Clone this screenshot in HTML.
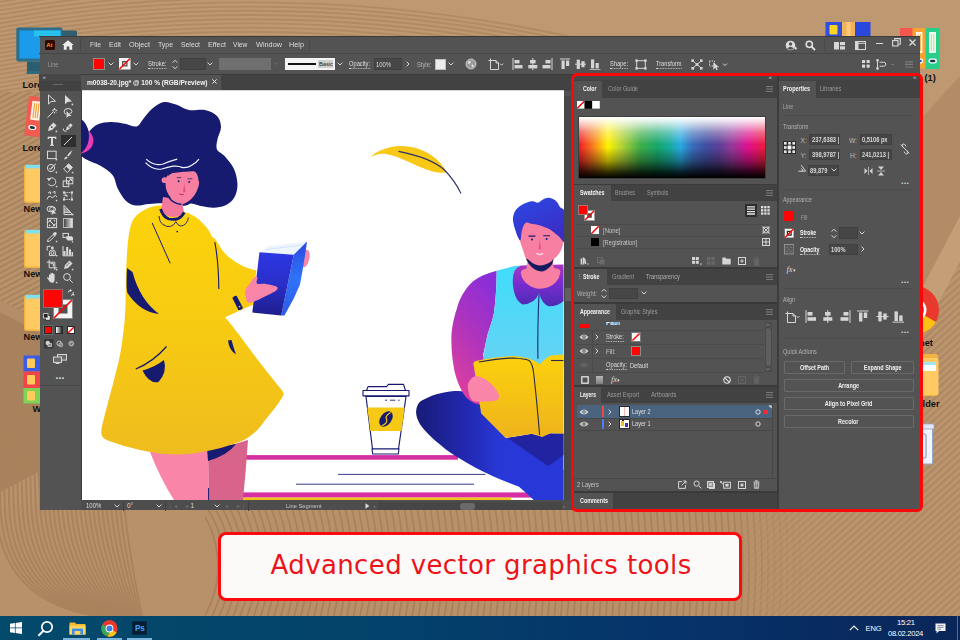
<!DOCTYPE html>
<html lang="en">
<head>
<meta charset="utf-8">
<title>Advanced vector graphics tools</title>
<style>
*{box-sizing:border-box;margin:0;padding:0}
html,body{width:960px;height:640px;overflow:hidden;background:#b8926c;font-family:"Liberation Sans",sans-serif}
#desk{position:absolute;left:0;top:0;width:960px;height:640px;overflow:hidden}
#desk div,#desk span,#desk svg,#desk i{position:absolute}
#win{left:39.5px;top:36.5px;width:880.5px;height:473px;background:#535353}
.t{color:#dedede;font-size:7.3px;line-height:9px;white-space:nowrap;font-style:normal}
.dim{color:#9c9c9c}
.b{font-weight:bold;color:#f4f4f4}
.u{border-bottom:1px dotted #cfcfcf;line-height:8px}
.bar{background:#424242}
.tab{background:#535353}
.fld{background:#464646;border:1px solid #404040}
.sep{height:1px;background:#494949}
.btn{height:13px;border:1px solid #6a6a6a;border-radius:1px;text-align:center;color:#f0f0f0;font-size:6.6px;line-height:11px;font-weight:bold;white-space:nowrap}
.btn b{display:inline-block;transform:scaleX(.83);font-weight:bold}
.ic{stroke:#d6d6d6;fill:none;stroke-width:1}
.dl{fill:#d6d6d6}
#label{left:218px;top:532px;width:524.4px;height:69px;background:#fcfaf9;border:3.2px solid #fb0b0b;border-radius:8px}
#label span{left:1.1px;top:0;width:518px;height:62.6px;line-height:61px;text-align:center;color:#ec1319;font-family:"DejaVu Sans","Liberation Sans",sans-serif;font-size:26px;white-space:nowrap;letter-spacing:0.38px}
#task{left:0;top:616px;width:960px;height:24px;background:linear-gradient(90deg,#044a6b 0%,#03426a 40%,#06336a 70%,#0a2659 100%)}
#hl{left:571.4px;top:72.8px;width:351.5px;height:439px;border:3.5px solid #f80808;border-radius:6px}
</style>
</head>
<body>
<div id="desk">
<svg style="left:0;top:0" width="960" height="640" viewBox="0 0 960 640">
<defs>
<pattern id="pd1" width="5" height="5" patternUnits="userSpaceOnUse" patternTransform="rotate(-14)"><rect width="5" height="5" fill="#bf9971"/><rect y="0" width="5" height="2.2" fill="#b38c65"/></pattern>
<pattern id="pd2" width="5" height="5" patternUnits="userSpaceOnUse" patternTransform="rotate(-28)"><rect width="5" height="5" fill="#b9936c"/><rect y="0" width="5" height="2.2" fill="#a9835c"/></pattern>
<pattern id="pd3" width="5.2" height="5.2" patternUnits="userSpaceOnUse" patternTransform="rotate(-42)"><rect width="5.2" height="5.2" fill="#bb956e"/><rect y="0" width="5.2" height="2.3" fill="#ae8861"/></pattern>
<linearGradient id="gtop" x1="0" x2="1"><stop offset="0" stop-color="#bf9971" stop-opacity="0"/><stop offset="0.55" stop-color="#bf9971" stop-opacity="0"/><stop offset="0.68" stop-color="#bf9971" stop-opacity="1"/><stop offset="1" stop-color="#be9870" stop-opacity="1"/></linearGradient>
<radialGradient id="gsm" cx="0.5" cy="0.5" r="0.5"><stop offset="0" stop-color="#b9926c"/><stop offset="0.8" stop-color="#b8916b"/><stop offset="1" stop-color="#b8916b" stop-opacity="0"/></radialGradient>
<clipPath id="cl"><rect x="0" y="395" width="230" height="221"/></clipPath>
<clipPath id="cr"><rect x="205" y="505" width="640" height="111"/></clipPath>
<linearGradient id="gm1" gradientUnits="userSpaceOnUse" x1="730" y1="0" x2="840" y2="0"><stop offset="0" stop-color="#fff"/><stop offset="1" stop-color="#000"/></linearGradient>
<linearGradient id="gm2" gradientUnits="userSpaceOnUse" x1="730" y1="0" x2="840" y2="0"><stop offset="0" stop-color="#000"/><stop offset="1" stop-color="#fff"/></linearGradient>
<mask id="m1"><rect x="0" y="0" width="960" height="640" fill="url(#gm1)"/></mask>
<mask id="m2"><rect x="0" y="0" width="960" height="640" fill="url(#gm2)"/></mask>
</defs>
<rect width="960" height="640" fill="#b9936c"/>
<rect x="0" y="0" width="960" height="40" fill="#be9870"/><rect x="0" y="40" width="42" height="58" fill="#be9870"/>
<clipPath id="ct"><path d="M0 0H960V40H42V100H0Z"/></clipPath><clipPath id="ct2"><rect x="0" y="0" width="250" height="100"/></clipPath><g clip-path="url(#ct)"><g fill="none" stroke="#b18a63" stroke-width="1.9"><circle cx="250" cy="1500" r="1380.0"/><circle cx="250" cy="1500" r="1384.2"/><circle cx="250" cy="1500" r="1388.4"/><circle cx="250" cy="1500" r="1392.6"/><circle cx="250" cy="1500" r="1396.8"/><circle cx="250" cy="1500" r="1401.0"/><circle cx="250" cy="1500" r="1405.2"/><circle cx="250" cy="1500" r="1409.4"/><circle cx="250" cy="1500" r="1413.6"/><circle cx="250" cy="1500" r="1417.8"/><circle cx="250" cy="1500" r="1422.0"/><circle cx="250" cy="1500" r="1426.2"/><circle cx="250" cy="1500" r="1430.4"/><circle cx="250" cy="1500" r="1434.6"/><circle cx="250" cy="1500" r="1438.8"/><circle cx="250" cy="1500" r="1443.0"/><circle cx="250" cy="1500" r="1447.2"/><circle cx="250" cy="1500" r="1451.4"/><circle cx="250" cy="1500" r="1455.6"/><circle cx="250" cy="1500" r="1459.8"/><circle cx="250" cy="1500" r="1464.0"/><circle cx="250" cy="1500" r="1468.2"/><circle cx="250" cy="1500" r="1472.4"/><circle cx="250" cy="1500" r="1476.6"/><circle cx="250" cy="1500" r="1480.8"/><circle cx="250" cy="1500" r="1485.0"/><circle cx="250" cy="1500" r="1489.2"/><circle cx="250" cy="1500" r="1493.4"/><circle cx="250" cy="1500" r="1497.6"/></g><g clip-path="url(#ct2)" fill="none" stroke="#b18a63" stroke-width="1.9"><circle cx="250" cy="1500" r="1501.8"/><circle cx="250" cy="1500" r="1506.0"/><circle cx="250" cy="1500" r="1510.2"/><circle cx="250" cy="1500" r="1514.4"/><circle cx="250" cy="1500" r="1518.6"/><circle cx="250" cy="1500" r="1522.8"/><circle cx="250" cy="1500" r="1527.0"/><circle cx="250" cy="1500" r="1531.2"/><circle cx="250" cy="1500" r="1535.4"/><circle cx="250" cy="1500" r="1539.6"/><circle cx="250" cy="1500" r="1543.8"/></g></g>
<rect x="0" y="92" width="42" height="220" fill="url(#pd2)"/>
<path d="M0 300 L42 322 V470 L0 492Z" fill="#a8825c"/>
<path d="M0 300 L42 322 V334 L0 312Z" fill="#b48e68"/>
<rect x="918" y="0" width="42" height="120" fill="#be9870"/>
<path d="M918 122 L960 76 V216 L918 296Z" fill="#b28c66"/>
<path d="M918 296 L960 216 V262 L918 342Z" fill="#c49e76"/>
<path d="M918 342 L960 262 V520 H918Z" fill="url(#pd3)"/>
<rect x="0" y="505" width="960" height="115" fill="#b8916b"/>
<g clip-path="url(#cl)" fill="none" stroke="#a9835d" stroke-width="2"><path d="M112.0 395.0 L124.0 505.0 Q130.0 560.0 142.0 616.0"/><path d="M108.1 395.0 L119.6 505.0 Q125.4 561.4 140.4 616.0"/><path d="M104.3 395.0 L115.2 505.0 Q120.9 562.8 138.8 616.0"/><path d="M100.4 395.0 L110.8 505.0 Q116.3 564.1 137.2 616.0"/><path d="M96.4 395.0 L106.3 505.0 Q111.8 565.5 135.7 616.0"/><path d="M92.5 395.0 L101.9 505.0 Q107.2 566.9 134.1 616.0"/><path d="M88.5 395.0 L97.5 505.0 Q102.7 568.3 132.5 616.0"/><path d="M84.5 395.0 L93.1 505.0 Q98.1 569.7 130.9 616.0"/><path d="M80.5 395.0 L88.7 505.0 Q93.6 571.0 129.3 616.0"/><path d="M76.5 395.0 L84.3 505.0 Q89.0 572.4 127.7 616.0"/><path d="M72.5 395.0 L79.9 505.0 Q84.5 573.8 126.1 616.0"/><path d="M68.4 395.0 L75.4 505.0 Q79.9 575.2 124.6 616.0"/><path d="M64.4 395.0 L71.0 505.0 Q75.4 576.6 123.0 616.0"/><path d="M60.3 395.0 L66.6 505.0 Q70.8 577.9 121.4 616.0"/><path d="M56.2 395.0 L62.2 505.0 Q66.3 579.3 119.8 616.0"/><path d="M52.1 395.0 L57.8 505.0 Q61.7 580.7 118.2 616.0"/><path d="M48.0 395.0 L53.4 505.0 Q57.2 582.1 116.6 616.0"/><path d="M43.8 395.0 L49.0 505.0 Q52.6 583.4 115.0 616.0"/><path d="M39.7 395.0 L44.6 505.0 Q48.1 584.8 113.4 616.0"/><path d="M35.6 395.0 L40.1 505.0 Q43.5 586.2 111.9 616.0"/><path d="M31.4 395.0 L35.7 505.0 Q39.0 587.6 110.3 616.0"/><path d="M27.2 395.0 L31.3 505.0 Q34.4 589.0 108.7 616.0"/><path d="M23.1 395.0 L26.9 505.0 Q29.9 590.3 107.1 616.0"/><path d="M18.9 395.0 L22.5 505.0 Q25.3 591.7 105.5 616.0"/><path d="M14.7 395.0 L18.1 505.0 Q20.8 593.1 103.9 616.0"/><path d="M10.5 395.0 L13.7 505.0 Q16.2 594.5 102.3 616.0"/><path d="M6.3 395.0 L9.2 505.0 Q11.7 595.9 100.8 616.0"/><path d="M2.1 395.0 L4.8 505.0 Q7.1 597.2 99.2 616.0"/><path d="M-2.1 395.0 L0.4 505.0 Q2.6 598.6 97.6 616.0"/><path d="M-6.3 395.0 L-4.0 505.0 Q-2.0 600.0 96.0 616.0"/></g>
<g mask="url(#m1)"><g clip-path="url(#cr)" fill="none" stroke="#a8825c" stroke-width="1.8"><circle cx="118" cy="566" r="100.0"/><circle cx="118" cy="566" r="106.4"/><circle cx="118" cy="566" r="112.8"/><circle cx="118" cy="566" r="119.2"/><circle cx="118" cy="566" r="125.6"/><circle cx="118" cy="566" r="132.0"/><circle cx="118" cy="566" r="138.4"/><circle cx="118" cy="566" r="144.8"/><circle cx="118" cy="566" r="151.2"/><circle cx="118" cy="566" r="157.6"/><circle cx="118" cy="566" r="164.0"/><circle cx="118" cy="566" r="170.4"/><circle cx="118" cy="566" r="176.8"/><circle cx="118" cy="566" r="183.2"/><circle cx="118" cy="566" r="189.6"/><circle cx="118" cy="566" r="196.0"/><circle cx="118" cy="566" r="202.4"/><circle cx="118" cy="566" r="208.8"/><circle cx="118" cy="566" r="215.2"/><circle cx="118" cy="566" r="221.6"/><circle cx="118" cy="566" r="228.0"/><circle cx="118" cy="566" r="234.4"/><circle cx="118" cy="566" r="240.8"/><circle cx="118" cy="566" r="247.2"/><circle cx="118" cy="566" r="253.6"/><circle cx="118" cy="566" r="260.0"/><circle cx="118" cy="566" r="266.4"/><circle cx="118" cy="566" r="272.8"/><circle cx="118" cy="566" r="279.2"/><circle cx="118" cy="566" r="285.6"/><circle cx="118" cy="566" r="292.0"/><circle cx="118" cy="566" r="298.4"/><circle cx="118" cy="566" r="304.8"/><circle cx="118" cy="566" r="311.2"/><circle cx="118" cy="566" r="317.6"/><circle cx="118" cy="566" r="324.0"/><circle cx="118" cy="566" r="330.4"/><circle cx="118" cy="566" r="336.8"/><circle cx="118" cy="566" r="343.2"/><circle cx="118" cy="566" r="349.6"/><circle cx="118" cy="566" r="356.0"/><circle cx="118" cy="566" r="362.4"/><circle cx="118" cy="566" r="368.8"/><circle cx="118" cy="566" r="375.2"/><circle cx="118" cy="566" r="381.6"/><circle cx="118" cy="566" r="388.0"/><circle cx="118" cy="566" r="394.4"/><circle cx="118" cy="566" r="400.8"/><circle cx="118" cy="566" r="407.2"/><circle cx="118" cy="566" r="413.6"/><circle cx="118" cy="566" r="420.0"/><circle cx="118" cy="566" r="426.4"/><circle cx="118" cy="566" r="432.8"/><circle cx="118" cy="566" r="439.2"/><circle cx="118" cy="566" r="445.6"/><circle cx="118" cy="566" r="452.0"/><circle cx="118" cy="566" r="458.4"/><circle cx="118" cy="566" r="464.8"/><circle cx="118" cy="566" r="471.2"/><circle cx="118" cy="566" r="477.6"/><circle cx="118" cy="566" r="484.0"/><circle cx="118" cy="566" r="490.4"/><circle cx="118" cy="566" r="496.8"/><circle cx="118" cy="566" r="503.2"/><circle cx="118" cy="566" r="509.6"/><circle cx="118" cy="566" r="516.0"/><circle cx="118" cy="566" r="522.4"/><circle cx="118" cy="566" r="528.8"/><circle cx="118" cy="566" r="535.2"/><circle cx="118" cy="566" r="541.6"/><circle cx="118" cy="566" r="548.0"/><circle cx="118" cy="566" r="554.4"/><circle cx="118" cy="566" r="560.8"/><circle cx="118" cy="566" r="567.2"/><circle cx="118" cy="566" r="573.6"/><circle cx="118" cy="566" r="580.0"/><circle cx="118" cy="566" r="586.4"/><circle cx="118" cy="566" r="592.8"/><circle cx="118" cy="566" r="599.2"/><circle cx="118" cy="566" r="605.6"/><circle cx="118" cy="566" r="612.0"/><circle cx="118" cy="566" r="618.4"/><circle cx="118" cy="566" r="624.8"/><circle cx="118" cy="566" r="631.2"/><circle cx="118" cy="566" r="637.6"/><circle cx="118" cy="566" r="644.0"/><circle cx="118" cy="566" r="650.4"/><circle cx="118" cy="566" r="656.8"/><circle cx="118" cy="566" r="663.2"/><circle cx="118" cy="566" r="669.6"/><circle cx="118" cy="566" r="676.0"/><circle cx="118" cy="566" r="682.4"/><circle cx="118" cy="566" r="688.8"/><circle cx="118" cy="566" r="695.2"/><circle cx="118" cy="566" r="701.6"/><circle cx="118" cy="566" r="708.0"/><circle cx="118" cy="566" r="714.4"/><circle cx="118" cy="566" r="720.8"/><circle cx="118" cy="566" r="727.2"/><circle cx="118" cy="566" r="733.6"/><circle cx="118" cy="566" r="740.0"/></g></g>
<rect x="720" y="505" width="240" height="112" fill="url(#pd3)" mask="url(#m2)"/>
</svg>
<!-- left desktop icons -->
<svg style="left:14px;top:24px" width="70" height="54" viewBox="14 24 70 54"><rect x="55" y="30.5" width="22" height="40" rx="1.5" fill="#2f5f6e"/><rect x="16.3" y="27.5" width="46" height="34" rx="2" fill="#2b6f8a"/><rect x="19.5" y="30.5" width="41" height="28" fill="#1b9ceb"/><rect x="34" y="30.5" width="26.5" height="6" fill="#27c3ee"/><rect x="27" y="61.5" width="20" height="9.5" fill="#2a5f72"/><rect x="26.5" y="71" width="22" height="3" rx="1" fill="#2f6a7e"/></svg>
<span class="t" style="left:22.5px;top:79.5px;font-size:9.2px;font-weight:bold;color:#111;line-height:11px">Lorem</span>
<svg style="left:22px;top:94px" width="24" height="46" viewBox="22 94 24 46"><g transform="rotate(7 34 117)"><rect x="26.5" y="96.5" width="17" height="40" rx="1.5" fill="#f25b50"/><rect x="30.5" y="101" width="9" height="19" fill="#fff3e6"/><path d="M33 103v15M35.2 103v15M37.4 103v15" stroke="#f2a23a" stroke-width="1.2"/><rect x="29.6" y="125.4" width="8" height="4.6" rx="2.3" fill="#fff"/><rect x="31" y="126.4" width="5.2" height="2.6" rx="1.3" fill="#13333f"/></g></svg>
<span class="t" style="left:22.5px;top:143px;font-size:9.2px;font-weight:bold;color:#111;line-height:11px">Lorem</span>
<svg style="left:23px;top:164px" width="24" height="40" viewBox="0 0 24 40"><rect x="1" y="1" width="22" height="38" rx="2" fill="#f3b343"/><rect x="2.6" y="0.8" width="20" height="4" fill="#7fe0ee"/><rect x="2.4" y="4.6" width="21" height="33" rx="1.5" fill="#ffca62"/></svg>
<span class="t" style="left:23.5px;top:204px;font-size:9.2px;font-weight:bold;color:#111;line-height:11px">New</span>
<svg style="left:23px;top:229px" width="24" height="40" viewBox="0 0 24 40"><rect x="1" y="1" width="22" height="38" rx="2" fill="#f3b343"/><rect x="2.6" y="0.8" width="20" height="4" fill="#7fe0ee"/><rect x="2.4" y="4.6" width="21" height="33" rx="1.5" fill="#ffca62"/></svg>
<span class="t" style="left:23.5px;top:268.5px;font-size:9.2px;font-weight:bold;color:#111;line-height:11px">New</span>
<svg style="left:23px;top:293.5px" width="24" height="38" viewBox="0 0 24 38"><rect x="1" y="1" width="22" height="36" rx="2" fill="#f3b343"/><rect x="2.6" y="0.8" width="20" height="4" fill="#7fe0ee"/><rect x="2.4" y="4.6" width="21" height="31" rx="1.5" fill="#ffca62"/></svg>
<span class="t" style="left:23.5px;top:332px;font-size:9.2px;font-weight:bold;color:#111;line-height:11px">New</span>
<svg style="left:23px;top:355px" width="24" height="50" viewBox="0 0 24 50"><rect x="0.5" y="0.5" width="23" height="16" fill="#3d5ce6"/><rect x="0.5" y="16.5" width="23" height="16.5" fill="#f2454a"/><rect x="0.5" y="33" width="23" height="15.5" fill="#7fd455"/><rect x="4" y="3.6" width="8" height="9.4" rx="1" fill="#ffcc5c"/><rect x="4" y="20" width="8" height="9.4" rx="1" fill="#ffcc5c"/><rect x="4" y="36" width="8" height="9.4" rx="1" fill="#ffcc5c"/></svg>
<span class="t" style="left:32.5px;top:403.5px;font-size:9.2px;font-weight:bold;color:#111;line-height:11px">Wo</span>
<!-- right/top desktop icons -->
<svg style="left:825px;top:21px" width="46" height="20" viewBox="0 0 46 20"><rect x="0.5" y="1" width="16.5" height="19" fill="#2f4fe0"/><rect x="4.5" y="4" width="8" height="9.5" rx="1" fill="#ffd21f"/><rect x="17" y="1" width="13" height="19" fill="#f2b25a"/><rect x="21.5" y="1" width="4" height="19" fill="#ffc978"/><rect x="30" y="1" width="15.5" height="19" fill="#2a48dc"/></svg>
<svg style="left:896px;top:26px" width="46" height="46" viewBox="896 26 46 46"><rect x="900" y="28" width="13" height="40" rx="1" fill="#f4564e"/><rect x="912.5" y="28" width="13.4" height="40.5" rx="1" fill="#f7a231"/><rect x="916" y="32" width="6.4" height="21" fill="#fff6e8"/><path d="M918 34v17M920.4 34v17" stroke="#f2b25a" stroke-width="1"/><rect x="915.6" y="58.6" width="7.6" height="4.8" rx="2.4" fill="#fff"/><rect x="917" y="59.7" width="4.8" height="2.6" rx="1.3" fill="#1e5aa8"/><rect x="925.6" y="28" width="14" height="41" rx="1" fill="#27cf8a"/><rect x="929" y="32" width="7" height="21" fill="#e8fff2"/><path d="M931.3 34v17M933.8 34v17" stroke="#f2c27a" stroke-width="1"/><rect x="928.4" y="58.6" width="8.6" height="4.8" rx="2.4" fill="#fff"/><rect x="930" y="59.7" width="5.4" height="2.6" rx="1.3" fill="#13333f"/></svg>
<span class="t" style="left:924.5px;top:73px;font-size:9.2px;font-weight:bold;color:#111;line-height:11px">(1)</span>
<svg style="left:890px;top:284px" width="52" height="52" viewBox="890 284 52 52"><circle cx="915" cy="310" r="24" fill="#e8392c"/><path d="M915 310 L936 322 A24 24 0 0 1 903 330.8Z" fill="#fbc116"/><circle cx="915" cy="310" r="11.5" fill="#fff"/><circle cx="915" cy="310" r="9" fill="#2f7fe8"/></svg>
<span class="t" style="left:915.5px;top:337.5px;font-size:9.2px;font-weight:bold;color:#111;line-height:11px">rnet</span>
<svg style="left:914px;top:353px" width="26" height="44" viewBox="0 0 26 44"><rect x="0" y="1" width="24" height="42" rx="2" fill="#f3b343"/><rect x="0" y="5" width="24.5" height="37" rx="1.5" fill="#ffca62"/><rect x="2" y="9" width="20" height="9" fill="#fff"/><rect x="2" y="9" width="20" height="3" fill="#9fe6f2"/></svg>
<span class="t" style="left:917px;top:398.5px;font-size:9.2px;font-weight:bold;color:#111;line-height:11px">older</span>
<svg style="left:912px;top:422px" width="24" height="44" viewBox="0 0 24 44"><rect x="1" y="6.5" width="19.5" height="35.5" rx="1" fill="#f1f4fb" stroke="#98a6c8" stroke-width="1"/><rect x="0" y="2" width="22" height="5" rx="1" fill="#e2e8f6" stroke="#98a6c8" stroke-width="0.8"/><rect x="10" y="12" width="4" height="24" rx="1.4" fill="none" stroke="#8c9cc4" stroke-width="1.2"/></svg>

<div id="win"></div>
<!-- menu bar -->
<div style="left:39px;top:36px;width:881px;height:1px;background:#3b3b3b"></div>
<div style="left:39px;top:53px;width:881px;height:1px;background:#464646"></div>
<div style="left:45px;top:40px;width:9.5px;height:9.5px;background:#2e0b00;border-radius:1.5px"></div>
<span class="t" style="left:46.3px;top:40.6px;color:#ff9a1f;font-size:6px;font-weight:bold;line-height:8px">Ai</span>
<svg style="left:62px;top:40px" width="12" height="10" viewBox="0 0 12 10"><path d="M6 0.3 L0.3 5 H1.8 V9.7 H4.7 V6.4 H7.3 V9.7 H10.2 V5 H11.7 Z" fill="#ececec"/></svg>
<div style="left:80px;top:39px;width:1px;height:12px;background:#474747"></div>
<span class="t" style="left:90px;top:40px;font-size:7.6px;transform:scaleX(0.898);transform-origin:0 50%">File</span>
<span class="t" style="left:109px;top:40px;font-size:7.6px;transform:scaleX(0.916);transform-origin:0 50%">Edit</span>
<span class="t" style="left:129px;top:40px;font-size:7.6px;transform:scaleX(0.957);transform-origin:0 50%">Object</span>
<span class="t" style="left:158px;top:40px;font-size:7.6px;transform:scaleX(0.911);transform-origin:0 50%">Type</span>
<span class="t" style="left:180.5px;top:40px;font-size:7.6px;transform:scaleX(0.9);transform-origin:0 50%">Select</span>
<span class="t" style="left:207.5px;top:40px;font-size:7.6px;transform:scaleX(0.934);transform-origin:0 50%">Effect</span>
<span class="t" style="left:233px;top:40px;font-size:7.6px;transform:scaleX(0.888);transform-origin:0 50%">View</span>
<span class="t" style="left:255.75px;top:40px;font-size:7.6px;transform:scaleX(0.962);transform-origin:0 50%">Window</span>
<span class="t" style="left:288.75px;top:40px;font-size:7.6px;transform:scaleX(0.96);transform-origin:0 50%">Help</span>
<div style="left:309px;top:39px;width:1px;height:12px;background:#494949"></div>
<!-- menu right icons -->
<svg style="left:785px;top:39.5px" width="13" height="11" viewBox="0 0 13 11"><circle cx="5.5" cy="5.5" r="4.8" fill="#dcdcdc"/><circle cx="5.5" cy="4" r="1.7" fill="#535353"/><path d="M2.3 8.6 Q5.5 5 8.7 8.6 Q5.5 11 2.3 8.6Z" fill="#535353"/><path d="M9.2 8.2h3M10.7 6.7v3" stroke="#dcdcdc" stroke-width="1.1"/></svg>
<svg style="left:804.5px;top:40px" width="11" height="11" viewBox="0 0 11 11"><circle cx="4.3" cy="4.3" r="3.1" fill="none" stroke="#e4e4e4" stroke-width="1.5"/><path d="M6.6 6.6 L10 10" stroke="#e4e4e4" stroke-width="1.8"/></svg>
<div style="left:824px;top:39px;width:1px;height:12px;background:#494949"></div>
<svg style="left:834px;top:41.5px" width="11" height="8" viewBox="0 0 11 8"><rect x="0" y="0" width="5" height="7.5" fill="#d8d8d8"/><rect x="6" y="0" width="5" height="3.2" fill="#d8d8d8"/><rect x="6" y="4.3" width="5" height="3.2" fill="#d8d8d8"/></svg>
<svg style="left:854.5px;top:41px" width="11" height="9" viewBox="0 0 11 9"><rect x="0.5" y="0.5" width="10" height="8" fill="none" stroke="#d8d8d8"/><rect x="0.5" y="0.5" width="3" height="8" fill="#d8d8d8"/><path d="M0.5 2.3h10" stroke="#d8d8d8"/></svg>
<div style="left:876px;top:42.6px;width:7px;height:1.2px;background:#dadada"></div>
<svg style="left:891.5px;top:38px" width="9" height="9" viewBox="0 0 9 9"><rect x="0.6" y="2.6" width="5.4" height="5.4" fill="none" stroke="#dadada" stroke-width="1.1"/><path d="M2.8 2.4V0.6H8.3V6.2H6.2" fill="none" stroke="#dadada" stroke-width="1.1"/></svg>
<svg style="left:908.5px;top:39px" width="7" height="7" viewBox="0 0 7 7"><path d="M0.5 0.5L6.5 6.5M6.5 0.5L0.5 6.5" stroke="#e2e2e2" stroke-width="1.2"/></svg>

<!-- control bar -->
<span class="t dim" style="left:47.75px;top:60px;font-size:7px;transform:scaleX(0.774);transform-origin:0 50%">Line</span>
<div style="left:93px;top:58px;width:11.5px;height:11.5px;background:#fb0505;border:1px solid #8c8c8c"></div>
<svg style="left:107.5px;top:61.5px" width="6" height="4" viewBox="0 0 6 4"><path d="M0.6 0.6L3 3L5.4 0.6" class="ic" stroke-width="1.1"/></svg>
<svg style="left:119px;top:58px" width="11.5" height="11.5" viewBox="0 0 11.5 11.5"><rect x="0" y="0" width="11.5" height="11.5" fill="#f4f4f4"/><rect x="3" y="3" width="5.5" height="5.5" fill="#535353"/><rect x="4.3" y="4.3" width="2.9" height="2.9" fill="#f4f4f4"/><path d="M0.5 11L11 0.5" stroke="#f00" stroke-width="1.4"/></svg>
<svg style="left:132.5px;top:61.5px" width="6" height="4" viewBox="0 0 6 4"><path d="M0.6 0.6L3 3L5.4 0.6" class="ic" stroke-width="1.1"/></svg>
<span class="t u" style="left:147.5px;top:60px;font-size:7px;transform:scaleX(0.834);transform-origin:0 50%">Stroke:</span>
<svg style="left:171.5px;top:58.5px" width="6" height="11" viewBox="0 0 6 11"><path d="M0.7 3.6L3 1.2L5.3 3.6M0.7 7.4L3 9.8L5.3 7.4" class="ic" stroke-width="1.1"/></svg>
<div class="fld" style="left:180px;top:58px;width:26px;height:12px"></div>
<svg style="left:207px;top:61.5px" width="6" height="4" viewBox="0 0 6 4"><path d="M0.6 0.6L3 3L5.4 0.6" class="ic" stroke-width="1.1"/></svg>
<div style="left:218.5px;top:57.5px;width:52.5px;height:12.5px;background:#6f6f6f"></div>
<svg style="left:273.5px;top:62px" width="5" height="4" viewBox="0 0 5 4"><path d="M0.6 0.6L2.5 2.6L4.4 0.6" fill="none" stroke="#6c6c6c" stroke-width="1"/></svg>
<div style="left:285px;top:58px;width:49.5px;height:11.5px;background:#f3f3f3"></div>
<div style="left:288px;top:62.7px;width:28px;height:2px;background:#111"></div>
<div style="left:318px;top:59.5px;width:15px;height:8.5px;background:#cfcfcf"></div>
<span class="t" style="left:319px;top:59.5px;font-size:5.8px;color:#222;letter-spacing:-0.1px">Basic</span>
<svg style="left:337px;top:61.5px" width="6" height="4" viewBox="0 0 6 4"><path d="M0.6 0.6L3 3L5.4 0.6" class="ic" stroke-width="1.1"/></svg>
<span class="t u" style="left:349px;top:60px;font-size:7px;transform:scaleX(0.818);transform-origin:0 50%">Opacity:</span>
<div class="fld" style="left:373.5px;top:58px;width:28px;height:12px"></div>
<span class="t" style="left:376px;top:60px;font-size:6.8px;transform:scaleX(0.863);transform-origin:0 50%">100%</span>
<svg style="left:406px;top:61px" width="4" height="6" viewBox="0 0 4 6"><path d="M0.6 0.6L3 3L0.6 5.4" class="ic" stroke-width="1.1"/></svg>
<span class="t dim" style="left:416.75px;top:60px;font-size:7px;color:#b4b4b4;transform:scaleX(0.828);transform-origin:0 50%">Style:</span>
<div style="left:434.5px;top:58.5px;width:11px;height:11px;background:#ebebeb;border:1px solid #bdbdbd"></div>
<svg style="left:448px;top:61.5px" width="6" height="4" viewBox="0 0 6 4"><path d="M0.6 0.6L3 3L5.4 0.6" class="ic" stroke-width="1.1"/></svg>
<svg style="left:464.5px;top:58px" width="12" height="12" viewBox="0 0 12 12"><circle cx="6" cy="6" r="5" fill="#9a9a9a" stroke="#d0d0d0" stroke-width="0.9"/><path d="M3 3.5Q5 2.5 6 4Q5 6 3.5 6Q2.5 5 3 3.5ZM6.5 6.5Q8.5 6 9 8Q8 9.5 7 9Z" fill="#e0e0e0"/></svg>
<!-- artboard icon -->
<svg style="left:488px;top:58px" width="16" height="12" viewBox="0 0 16 12"><path d="M2.5 0.5V11.5M0.5 2.5H8L10.5 5V11.5H2.5M8 2.5V5H10.5" class="ic" stroke-width="1"/><path d="M12 5.6L13.6 7.2L15.2 5.6" class="ic"/></svg>
<!-- align icons -->
<svg style="left:511.5px;top:57.5px" width="90" height="12.5" viewBox="0 0 90 12.5">
<g fill="#d4d4d4">
<rect x="0.5" y="0" width="1" height="12.5"/><rect x="2.5" y="2" width="5" height="3.4"/><rect x="2.5" y="7" width="8" height="3.4"/>
<rect x="20.3" y="0" width="1" height="12.5"/><rect x="18" y="2" width="5.6" height="3.4"/><rect x="16.3" y="7" width="9" height="3.4"/>
<rect x="39.5" y="0" width="1" height="12.5"/><rect x="33.5" y="2" width="5" height="3.4"/><rect x="30.5" y="7" width="8" height="3.4"/>
<rect x="48" y="0.5" width="10" height="1"/><rect x="49.5" y="2.5" width="3.2" height="8.5"/><rect x="54" y="2.5" width="3.2" height="5.5"/>
<rect x="63" y="5.7" width="11" height="1"/><rect x="64.7" y="1.6" width="3.2" height="9.4"/><rect x="69.4" y="3.2" width="3.2" height="6"/>
<rect x="77.5" y="11.3" width="11" height="1"/><rect x="79" y="1.4" width="3.2" height="9"/><rect x="83.6" y="5" width="3.2" height="5.4"/>
</g></svg>
<span class="t u" style="left:609.5px;top:60px;font-size:7px;transform:scaleX(0.811);transform-origin:0 50%">Shape:</span>
<svg style="left:635px;top:58.5px" width="12" height="11" viewBox="0 0 12 11"><rect x="1.7" y="1.7" width="8.6" height="7.6" class="ic"/><g fill="#d6d6d6"><rect x="0.4" y="0.4" width="2.4" height="2.4"/><rect x="9.2" y="0.4" width="2.4" height="2.4"/><rect x="0.4" y="8.2" width="2.4" height="2.4"/><rect x="9.2" y="8.2" width="2.4" height="2.4"/></g></svg>
<span class="t u" style="left:656px;top:60px;font-size:7px;transform:scaleX(0.806);transform-origin:0 50%">Transform</span>
<svg style="left:691px;top:58.5px" width="12" height="11" viewBox="0 0 12 11"><g fill="#d6d6d6"><rect x="0.4" y="0.4" width="2.6" height="2.6"/><rect x="9" y="0.4" width="2.6" height="2.6"/><rect x="0.4" y="8" width="2.6" height="2.6"/><rect x="9" y="8" width="2.6" height="2.6"/><rect x="4.7" y="4.2" width="2.6" height="2.6"/></g><path d="M2.5 2.5L9.5 8.5M9.5 2.5L2.5 8.5" class="ic" stroke-width="0.9"/></svg>
<svg style="left:709px;top:58.5px" width="20" height="12" viewBox="0 0 20 12"><rect x="0.5" y="2" width="5" height="5" class="ic" stroke-dasharray="1.3 1"/><path d="M4.3 3.2L4.3 10.7L6.3 8.7L7.5 11.3L8.7 10.7L7.6 8.2L10.3 8.2Z" fill="#d6d6d6"/><path d="M14 4.6L16 6.6L18 4.6" class="ic" stroke-width="1.1"/></svg>
<!-- right control icons -->
<svg style="left:862px;top:60px" width="8" height="8" viewBox="0 0 8 8"><g fill="#d8d8d8"><rect x="0" y="0" width="3.1" height="3.1" rx="0.6"/><rect x="4.6" y="0" width="3.1" height="3.1" rx="0.6"/><rect x="0" y="4.6" width="3.1" height="3.1" rx="0.6"/><rect x="4.6" y="4.6" width="3.1" height="3.1" rx="0.6"/></g></svg>
<svg style="left:876px;top:58.5px" width="11" height="11" viewBox="0 0 11 11"><path d="M1.5 0.5V10.5" class="ic" stroke-width="1.3"/><rect x="0.3" y="0.2" width="2.4" height="2.2" fill="#d6d6d6"/><rect x="0.3" y="8.4" width="2.4" height="2.2" fill="#d6d6d6"/><path d="M3.5 3.2H7.6Q9.8 3.2 9.8 5.2Q9.8 7.2 7.6 7.2H3.5" class="ic" stroke-width="1.2"/></svg>
<div style="left:890.5px;top:63.5px;width:3px;height:1px;background:#777"></div>
<svg style="left:904.5px;top:60.5px" width="8" height="7" viewBox="0 0 8 7"><path d="M0 0.8H8M0 3.4H8M0 6H8" stroke="#7b7b7b" stroke-width="1.2"/></svg>

<!-- document tab bar -->
<div class="bar" style="left:39px;top:74px;width:533px;height:16.5px"></div>
<div style="left:39px;top:73.5px;width:881px;height:1px;background:#3c3c3c"></div>
<div style="left:39px;top:74px;width:42px;height:6.5px;background:#474747"></div>
<span class="t" style="left:42.5px;top:72.8px;font-size:6px;color:#c8c8c8;line-height:8px">«</span>
<div class="tab" style="left:81px;top:74.5px;width:139.5px;height:16px"></div>
<span class="t b" style="left:86.75px;top:77.6px;font-size:7px;transform:scaleX(0.94);transform-origin:0 50%">m0038-20.jpg* @ 100 % (RGB/Preview)</span>
<svg style="left:212.3px;top:79.3px" width="5" height="5" viewBox="0 0 5 5"><path d="M0.4 0.4L4.6 4.6M4.6 0.4L0.4 4.6" stroke="#e8e8e8" stroke-width="1"/></svg>

<div style="left:53px;top:83.5px;width:10px;height:1px;background:#696969"></div>
<!-- canvas -->
<div style="left:80.5px;top:90px;width:483px;height:410px;background:#fff;border-top:1px solid #d6d6d6"></div>
<div style="left:563.5px;top:90px;width:8.5px;height:410px;background:#474747"></div>
<div style="left:563.5px;top:90.5px;width:8.5px;height:5px;background:#505050"></div>
<div style="left:565px;top:288px;width:5.5px;height:13px;background:#5f5f5f"></div>
<div style="left:80.5px;top:90px;width:1px;height:410px;background:#3d3d3d"></div>

<!-- status bar -->
<div style="left:80.5px;top:500px;width:491.5px;height:10px;background:#4d4d4d"></div>
<span class="t" style="left:85.75px;top:502.2px;font-size:6.5px;line-height:8px;transform:scaleX(0.917);transform-origin:0 50%">100%</span>
<svg style="left:114px;top:504.3px" width="6" height="4" viewBox="0 0 6 4"><path d="M0.6 0.6L3 3L5.4 0.6" class="ic" stroke-width="1.1"/></svg>
<div style="left:122.5px;top:501.8px;width:1px;height:9px;background:#3f3f3f"></div>
<span class="t" style="left:127px;top:502.2px;font-size:6.5px;line-height:8px">0°</span>
<svg style="left:156px;top:504.3px" width="6" height="4" viewBox="0 0 6 4"><path d="M0.6 0.6L3 3L5.4 0.6" class="ic" stroke-width="1.1"/></svg>
<div style="left:164.5px;top:501.8px;width:1px;height:9px;background:#3f3f3f"></div>
<span class="t" style="left:169.5px;top:502.0px;font-size:6px;line-height:8px;color:#6e6e6e;letter-spacing:3px">|◂ ◂</span>
<span class="t" style="left:190.5px;top:502.2px;font-size:6.5px;line-height:8px">1</span>
<svg style="left:214px;top:504.3px" width="6" height="4" viewBox="0 0 6 4"><path d="M0.6 0.6L3 3L5.4 0.6" class="ic" stroke-width="1.1"/></svg>
<span class="t" style="left:226px;top:502.0px;font-size:6px;line-height:8px;color:#6e6e6e;letter-spacing:3px">▸ ▸|</span>
<div style="left:247.5px;top:501.8px;width:1px;height:9px;background:#3f3f3f"></div>
<span class="t" style="left:286px;top:502.4px;font-size:6px;line-height:8px;color:#c9c9c9;transform:scaleX(0.959);transform-origin:0 50%">Line Segment</span>
<svg style="left:364.5px;top:503.3px" width="5" height="6" viewBox="0 0 5 6"><path d="M0.5 0.3L4.3 3L0.5 5.7Z" fill="#dcdcdc"/></svg>
<span class="t" style="left:373.5px;top:501.6px;font-size:6px;line-height:8px;color:#9a9a9a">‹</span>
<div style="left:378px;top:502.3px;width:184px;height:8px;background:#464646"></div>
<div style="left:460px;top:502.8px;width:15px;height:7px;background:#6a6a6a;border-radius:3px"></div>
<span class="t" style="left:563px;top:501.6px;font-size:6px;line-height:8px;color:#9a9a9a">›</span>

<div style="left:60.8px;top:134.5px;width:15px;height:12px;background:#2f2f2f"></div>
<svg style="left:45.50px;top:93.50px" width="12" height="12" viewBox="0 0 12 12"><path d="M2.5 1L2.5 10L5 7.6L9.5 7.2Z" stroke="#dadada" fill="none" stroke-width="1" stroke-linejoin="round"/></svg>
<svg style="left:62.00px;top:93.50px" width="12" height="12" viewBox="0 0 12 12"><path d="M3 1L3 10.5L5.4 8L10 7.6Z" fill="#dadada"/><rect x="9.6" y="9.6" width="1.6" height="1.6" fill="#dadada"/></svg>
<svg style="left:45.50px;top:107.25px" width="12" height="12" viewBox="0 0 12 12"><path d="M1.5 10.5L7.5 4.5" stroke="#dadada" fill="none" stroke-width="1" stroke-width="1.4"/><path d="M8.5 1v2M8.5 5v1.5M6.2 3.6h1.4M9.6 3.6h1.6M6.9 2l.8.8M10.2 2l-.8.8M10.2 5.4l-.8-.8" stroke="#dadada" fill="none" stroke-width="1" stroke-width="0.8"/></svg>
<svg style="left:62.00px;top:107.25px" width="12" height="12" viewBox="0 0 12 12"><path d="M2 5Q2 1.5 6 1.5Q10 1.5 10 4.5Q10 6.5 7.5 6.5" stroke="#dadada" fill="none" stroke-width="1"/><path d="M4.5 4L4.5 11L6.3 9.3L9.5 9Z" fill="#dadada"/><path d="M2.3 5.2Q2.5 7 4 7" stroke="#dadada" fill="none" stroke-width="1"/></svg>
<svg style="left:45.50px;top:121.00px" width="12" height="12" viewBox="0 0 12 12"><path d="M2 10L3 6L7.5 1.5L10.5 4.5L6 9Z" fill="#dadada"/><circle cx="5.8" cy="6.2" r="0.9" fill="#535353"/><rect x="9.6" y="9.6" width="1.6" height="1.6" fill="#dadada"/></svg>
<svg style="left:62.00px;top:121.00px" width="12" height="12" viewBox="0 0 12 12"><path d="M4 9.5L4.6 6.6L8.5 2.2L10.6 4.2L6.7 8.6Z" fill="#dadada"/><path d="M1.2 7.5Q1 10.6 4.4 10.4" stroke="#dadada" fill="none" stroke-width="1"/><circle cx="7" cy="6" r="0.8" fill="#535353"/></svg>
<svg style="left:45.50px;top:134.75px" width="12" height="12" viewBox="0 0 12 12"><path d="M1.7 1.8H10.3V4H9.4Q9.2 3 8.2 3H6.9V9.3Q6.9 10 8 10.1V10.8H4V10.1Q5.1 10 5.1 9.3V3H3.8Q2.8 3 2.6 4H1.7Z" fill="#e8e8e8"/></svg>
<svg style="left:62.00px;top:134.75px" width="12" height="12" viewBox="0 0 12 12"><path d="M2 10L10 2" stroke="#dadada" fill="none" stroke-width="1" stroke-width="1.3"/></svg>
<svg style="left:45.50px;top:148.50px" width="12" height="12" viewBox="0 0 12 12"><rect x="1.5" y="2.2" width="8.6" height="7.4" stroke="#dadada" fill="none" stroke-width="1" fill="#6c6c6c"/><rect x="9.6" y="9.8" width="1.6" height="1.6" fill="#dadada"/></svg>
<svg style="left:62.00px;top:148.50px" width="12" height="12" viewBox="0 0 12 12"><path d="M10.5 1Q7 3.5 5.2 6.6L6.4 7.6Q9 5 10.5 1Z" fill="#dadada"/><path d="M4.6 7.4Q2.6 7.6 2 10.6Q4.6 10.6 5.7 8.5Z" fill="#dadada"/></svg>
<svg style="left:45.50px;top:162.25px" width="12" height="12" viewBox="0 0 12 12"><circle cx="5" cy="6" r="3.6" stroke="#dadada" fill="none" stroke-width="1"/><path d="M4.5 6.5L10 1.8" stroke="#dadada" fill="none" stroke-width="1" stroke-width="1.2"/><path d="M3.4 6L4.6 7.4L6.6 5" stroke="#dadada" fill="none" stroke-width="1" stroke-width="0.8"/><rect x="9.6" y="9.6" width="1.6" height="1.6" fill="#dadada"/></svg>
<svg style="left:62.00px;top:162.25px" width="12" height="12" viewBox="0 0 12 12"><path d="M1.6 7L6.6 1.8L10.4 5.4L5.4 10.6Z" stroke="#dadada" fill="none" stroke-width="1"/><path d="M4 4.5L6.6 1.8L10.4 5.4L7.8 8.1Z" fill="#dadada"/><rect x="9.8" y="9.8" width="1.5" height="1.5" fill="#dadada"/></svg>
<svg style="left:45.50px;top:176.00px" width="12" height="12" viewBox="0 0 12 12"><path d="M2.6 3.4A4 4 0 1 1 2.2 7.6" stroke="#dadada" fill="none" stroke-width="1" stroke-width="1.1"/><path d="M0.8 2L2.8 5.2L5.2 2.6Z" fill="#dadada"/><rect x="9.8" y="9.8" width="1.5" height="1.5" fill="#dadada"/></svg>
<svg style="left:62.00px;top:176.00px" width="12" height="12" viewBox="0 0 12 12"><rect x="1.2" y="5" width="5.6" height="5.6" stroke="#dadada" fill="none" stroke-width="1"/><rect x="4.4" y="1.4" width="6.4" height="6.4" stroke="#dadada" fill="none" stroke-width="1"/><path d="M5.8 6.4L9.4 2.8M9.4 2.8H7.2M9.4 2.8V5" stroke="#dadada" fill="none" stroke-width="1" stroke-width="0.9"/></svg>
<svg style="left:45.50px;top:189.75px" width="12" height="12" viewBox="0 0 12 12"><path d="M1 9.5Q2.5 5 4.5 6.5Q6.5 9 8 6.5Q9.5 4 11 7" stroke="#dadada" fill="none" stroke-width="1" stroke-width="1.2"/><path d="M2 3.2L4.2 1.6L4.6 4.2M6.6 2.4L9 1.4L9 4" stroke="#dadada" fill="none" stroke-width="1" stroke-width="0.9"/><rect x="9.8" y="9.8" width="1.5" height="1.5" fill="#dadada"/></svg>
<svg style="left:62.00px;top:189.75px" width="12" height="12" viewBox="0 0 12 12"><rect x="2.2" y="2.6" width="7.6" height="6.8" stroke="#dadada" fill="none" stroke-width="1" stroke-dasharray="1.4 0.9"/><g fill="#dadada"><rect x="1" y="1.4" width="2.2" height="2.2"/><rect x="8.8" y="1.4" width="2.2" height="2.2"/><rect x="1" y="8.4" width="2.2" height="2.2"/><rect x="8.8" y="8.4" width="2.2" height="2.2"/></g><path d="M3.2 3.2L6.4 6.6L3.4 6.4Z" fill="#dadada"/></svg>
<svg style="left:45.50px;top:203.50px" width="12" height="12" viewBox="0 0 12 12"><ellipse cx="4.6" cy="5" rx="3.6" ry="2.8" stroke="#dadada" fill="none" stroke-width="1"/><ellipse cx="6.6" cy="5.2" rx="3" ry="2.4" stroke="#dadada" fill="none" stroke-width="1"/><path d="M5.6 5.5L5.8 11L7.4 9.4L10.6 9.6Z" fill="#dadada"/></svg>
<svg style="left:62.00px;top:203.50px" width="12" height="12" viewBox="0 0 12 12"><path d="M2 1.4V10.6H10.6Z" stroke="#dadada" fill="none" stroke-width="1"/><path d="M2 5H5.4L7.2 7H2M2 8.4H8.6" stroke="#dadada" fill="none" stroke-width="1" stroke-width="0.8"/><rect x="9.8" y="9.8" width="1.5" height="1.5" fill="#dadada"/></svg>
<svg style="left:45.50px;top:217.25px" width="12" height="12" viewBox="0 0 12 12"><rect x="1.4" y="1.4" width="9.2" height="9.2" stroke="#dadada" fill="none" stroke-width="1"/><path d="M1.4 6Q4 2.4 6 6Q8 9.6 10.6 6M6 1.4Q2.6 4 6 6Q9.6 8 6 10.6" stroke="#dadada" fill="none" stroke-width="1" stroke-width="0.8"/><g fill="#dadada"><circle cx="3.6" cy="3.6" r="0.8"/><circle cx="8.4" cy="8.4" r="0.8"/><circle cx="8.4" cy="3.6" r="0.8"/><circle cx="3.6" cy="8.4" r="0.8"/></g></svg>
<svg style="left:62.00px;top:217.25px" width="12" height="12" viewBox="0 0 12 12"><defs><linearGradient id="tg" x1="0" x2="1"><stop offset="0" stop-color="#3a3a3a"/><stop offset="1" stop-color="#f0f0f0"/></linearGradient></defs><rect x="1.4" y="1.6" width="9.2" height="8.8" fill="url(#tg)" stroke="#cfcfcf" stroke-width="0.8"/></svg>
<svg style="left:45.50px;top:231.00px" width="12" height="12" viewBox="0 0 12 12"><path d="M1.4 10.6L2 8.6L7 3.6L8.6 5.2L3.6 10.2Z" stroke="#dadada" fill="none" stroke-width="1"/><path d="M6.6 2.8L8.4 1.2Q9.6 0.6 10.4 1.6Q11.2 2.6 10.4 3.6L9 5.2Z" fill="#dadada"/><rect x="9.8" y="9.8" width="1.5" height="1.5" fill="#dadada"/></svg>
<svg style="left:62.00px;top:231.00px" width="12" height="12" viewBox="0 0 12 12"><rect x="1" y="2.4" width="5.4" height="4" stroke="#dadada" fill="none" stroke-width="1"/><path d="M4.4 5.2L9.6 5.2L11 6.6L11 9.6L5.8 9.6L4.4 8.2Z" fill="#dadada"/><rect x="9.8" y="10.2" width="1.3" height="1.3" fill="#dadada"/></svg>
<svg style="left:45.50px;top:244.75px" width="12" height="12" viewBox="0 0 12 12"><path d="M1.2 1.4H4.6M1.2 1.4V5.6" stroke="#dadada" fill="none" stroke-width="1" stroke-width="1.2"/><circle cx="6.4" cy="3" r="1.4" fill="#dadada"/><path d="M3.4 10.6V7.4Q3.4 5 6.4 5Q9.4 5 9.4 7.4V10.6Z" stroke="#dadada" fill="none" stroke-width="1"/><circle cx="6.4" cy="8" r="1.5" stroke="#dadada" fill="none" stroke-width="1" stroke-width="0.8"/><rect x="10" y="10" width="1.4" height="1.4" fill="#dadada"/></svg>
<svg style="left:62.00px;top:244.75px" width="12" height="12" viewBox="0 0 12 12"><g fill="#dadada"><rect x="1.4" y="6" width="2" height="4.4"/><rect x="4.2" y="2" width="2" height="8.4"/><rect x="7" y="4.4" width="2" height="6"/><rect x="9.6" y="7" width="1.4" height="3.4"/></g><path d="M1 1V10.8H11.4" stroke="#dadada" fill="none" stroke-width="1" stroke-width="0.8"/></svg>
<svg style="left:45.50px;top:258.50px" width="12" height="12" viewBox="0 0 12 12"><path d="M3.2 0.8V8.8H11.2M0.8 3.2H8.8V11.2" stroke="#dadada" fill="none" stroke-width="1"/><path d="M4.6 4.6H7.4V7.4" stroke="#dadada" fill="none" stroke-width="1" stroke-width="0.8"/><rect x="10" y="10" width="1.4" height="1.4" fill="#dadada"/></svg>
<svg style="left:62.00px;top:258.50px" width="12" height="12" viewBox="0 0 12 12"><path d="M2 10L3 6L7.5 1.5L10.5 4.5L6 9Z" fill="#dadada"/><path d="M4 7.4L8 3.4" stroke="#535353" stroke-width="0.8"/><rect x="9.8" y="9.8" width="1.5" height="1.5" fill="#dadada"/></svg>
<svg style="left:45.50px;top:272.25px" width="12" height="12" viewBox="0 0 12 12"><path d="M3 6.4V3.2Q3 2.4 3.7 2.4Q4.4 2.4 4.4 3.2V1.8Q4.4 1 5.1 1Q5.8 1 5.8 1.8V1.4Q5.8 0.7 6.5 0.7Q7.2 0.7 7.2 1.5V2.4Q7.2 1.7 7.9 1.7Q8.6 1.7 8.6 2.5V7.4Q8.6 10.8 6 10.8Q4 10.8 3 8.8L1.2 6Q0.9 5.2 1.6 5Q2.2 4.9 3 6.4Z" fill="#dadada"/><rect x="9.8" y="9.8" width="1.5" height="1.5" fill="#dadada"/></svg>
<svg style="left:62.00px;top:272.25px" width="12" height="12" viewBox="0 0 12 12"><circle cx="5" cy="5" r="3.4" stroke="#dadada" fill="none" stroke-width="1" stroke-width="1.2"/><path d="M7.4 7.4L10.8 10.8" stroke="#dadada" fill="none" stroke-width="1" stroke-width="1.7"/></svg>
<svg style="left:52.5px;top:299px" width="20" height="20" viewBox="0 0 20 20"><rect x="0.5" y="0.5" width="19" height="19" fill="#f4f4f4" stroke="#888"/><rect x="5.5" y="5.5" width="9" height="9" fill="#535353"/><path d="M1 19L19 1" stroke="#f00" stroke-width="1.6"/></svg>
<div style="left:43.3px;top:289.3px;width:19.4px;height:19px;background:#fb0505;border:1px solid #9a6a6a"></div>
<svg style="left:66.5px;top:288.5px" width="8" height="8" viewBox="0 0 8 8"><path d="M1.2 3.4Q1.4 1.2 4.4 1.4M4.4 1.4L3.2 0.4M4.4 1.4L3.2 2.6M6.4 3Q6.6 6 4 6.4" stroke="#dadada" fill="none" stroke-width="1"/><path d="M5 6.2L6.6 4.4L7.6 6.4Z" fill="#dadada"/></svg>
<svg style="left:43px;top:312.5px" width="8" height="8" viewBox="0 0 8 8"><rect x="2.6" y="2.6" width="4.6" height="4.6" fill="#f0f0f0" stroke="#222" stroke-width="0.8"/><rect x="0.6" y="0.6" width="4.4" height="4.4" fill="#222" stroke="#ddd" stroke-width="0.8"/></svg>
<div style="left:43.8px;top:325.5px;width:8px;height:8px;background:#fb0505;border:1px solid #2a2a2a;outline:1px solid #6a6a6a"></div>
<div style="left:55.3px;top:325.5px;width:8px;height:8px;background:linear-gradient(90deg,#fff,#222);border:1px solid #2a2a2a"></div>
<svg style="left:66.8px;top:325.5px" width="8" height="8" viewBox="0 0 8 8"><rect x="0.5" y="0.5" width="7" height="7" fill="#fff" stroke="#2a2a2a"/><path d="M1 7L7 1" stroke="#f00" stroke-width="1.4"/></svg>
<svg style="left:43.5px;top:338.5px" width="32" height="10" viewBox="0 0 32 10"><rect x="0" y="0" width="9.5" height="9.5" fill="#3a3a3a"/><circle cx="3.8" cy="4" r="2.2" fill="#cfcfcf"/><rect x="4" y="4.3" width="3.6" height="3.4" fill="#8c8c8c" stroke="#e0e0e0" stroke-width="0.6"/><circle cx="15.2" cy="4.4" r="2.3" fill="none" stroke="#cfcfcf" stroke-width="0.9"/><circle cx="16.8" cy="5.8" r="2" fill="#8e8e8e" stroke="#cfcfcf" stroke-width="0.6"/><circle cx="27.3" cy="4.6" r="2.4" fill="#9a9a9a" stroke="#cfcfcf" stroke-width="0.7"/><path d="M26 4.6L27 5.6L28.6 3.6" stroke="#444" fill="none" stroke-width="0.7"/></svg>
<svg style="left:52.5px;top:353.5px" width="14" height="10" viewBox="0 0 14 10"><rect x="4.5" y="0.5" width="9" height="5.6" fill="#6a6a6a" stroke="#d6d6d6"/><rect x="0.5" y="3" width="8" height="5.4" fill="#6a6a6a" stroke="#d6d6d6"/><path d="M2.6 9.5H6.4" stroke="#d6d6d6"/></svg>
<span class="t" style="left:55.5px;top:370.5px;font-size:10px;letter-spacing:0.2px;line-height:9px;font-weight:bold;color:#e6e6e6">...</span>
<div style="left:40px;top:384.5px;width:40.5px;height:1px;background:#474747"></div>
<svg style="left:81px;top:91px" width="482.5" height="409" viewBox="81 91 482.5 409">
<defs>
<linearGradient id="gcoat" x1="0" y1="0" x2="0" y2="1"><stop offset="0" stop-color="#fcd30b"/><stop offset="0.5" stop-color="#f7ca12"/><stop offset="1" stop-color="#efbc1e"/></linearGradient>
<linearGradient id="gbook" x1="0" y1="0" x2="0" y2="1"><stop offset="0" stop-color="#fcd20c"/><stop offset="1" stop-color="#eeb31d"/></linearGradient>
<linearGradient id="garm" x1="0.7" y1="0" x2="0.3" y2="1"><stop offset="0" stop-color="#8a2ed8"/><stop offset="0.5" stop-color="#b034bc"/><stop offset="1" stop-color="#e0409c"/></linearGradient>
<linearGradient id="gcol" x1="0" y1="0" x2="0" y2="1"><stop offset="0" stop-color="#a836c0"/><stop offset="0.45" stop-color="#7a2cd0"/><stop offset="1" stop-color="#4c2ab4"/></linearGradient>
<linearGradient id="gvest" x1="0" y1="0" x2="0" y2="1"><stop offset="0" stop-color="#3fdcfa"/><stop offset="1" stop-color="#68d2f4"/></linearGradient>
<linearGradient id="gleg" gradientUnits="userSpaceOnUse" x1="416" y1="0" x2="500" y2="0"><stop offset="0" stop-color="#171b76"/><stop offset="0.55" stop-color="#2127ac"/><stop offset="1" stop-color="#2838d8"/></linearGradient>
<linearGradient id="ghair" x1="0" y1="0" x2="0.6" y2="1"><stop offset="0" stop-color="#2a4ae4"/><stop offset="1" stop-color="#3b2cc4"/></linearGradient>
<linearGradient id="gbk" x1="0" y1="0" x2="0" y2="1"><stop offset="0" stop-color="#2c38e4"/><stop offset="0.5" stop-color="#2a2ec8"/><stop offset="1" stop-color="#1e1e8c"/></linearGradient>
<linearGradient id="gbs" x1="0" y1="0" x2="0" y2="1"><stop offset="0" stop-color="#2a48e0"/><stop offset="0.5" stop-color="#2f74f8"/><stop offset="1" stop-color="#2c5ae8"/></linearGradient>
</defs>
<rect x="246" y="455.1" width="212" height="4.6" fill="#d62fa2"/>
<rect x="240" y="492.4" width="293" height="5.2" fill="#d62fa2"/>
<rect x="243" y="497.6" width="268" height="3" fill="#f4c414"/>
<path d="M338 474.4H485.5M296 484.2H474" stroke="#23277e" stroke-width="0.9" fill="none"/>
<path d="M150 452 Q160 478 174 500 H209 L208 450Z" fill="#f986a9"/>
<path d="M208 452 L209 500 H243 Q246 470 248 440Z" fill="#d9648b"/>
<path d="M207 448 L236 444 Q228 455 208 461Z" fill="#171b70"/>
<path d="M208.6 488V500" stroke="#171b70" stroke-width="1"/>
<path d="M79.0 152.0 C78.8 148.8 83.2 143.5 85.0 140.0 C86.8 136.5 87.5 133.6 89.7 131.0 C91.9 128.4 94.5 125.8 98.0 124.3 C101.5 122.8 106.3 122.1 110.8 122.0 C115.3 121.9 120.7 123.0 125.0 123.7 C129.3 124.4 133.5 127.3 136.6 126.4 C139.7 125.5 140.9 121.5 143.6 118.4 C146.3 115.3 149.6 110.7 153.0 108.0 C156.4 105.3 160.2 102.6 164.0 102.0 C167.8 101.4 171.8 103.2 176.0 104.5 C180.2 105.8 184.2 109.1 189.0 110.0 C193.8 110.9 200.3 109.0 205.0 110.0 C209.7 111.0 214.3 113.2 217.0 116.0 C219.7 118.8 220.9 123.2 221.0 127.0 C221.1 130.8 218.2 135.2 217.5 139.0 C216.8 142.8 215.8 146.6 217.0 149.5 C218.2 152.4 222.2 153.2 225.0 156.5 C227.8 159.8 231.9 164.2 234.0 169.0 C236.1 173.8 237.5 180.2 237.5 185.0 C237.5 189.8 236.1 194.6 234.0 198.0 C231.9 201.4 228.4 204.0 225.0 205.6 C221.6 207.2 217.6 207.6 213.8 207.7 C210.1 207.8 206.2 207.0 202.5 206.3 C198.8 205.6 194.1 203.5 191.3 203.4 C188.6 203.3 188.7 205.1 186.0 205.5 C183.3 205.9 178.9 206.1 175.0 206.0 C171.1 205.9 164.5 205.4 162.4 205.0 C160.3 204.6 164.6 203.6 162.4 203.4 C160.2 203.2 153.5 203.7 149.0 204.0 C144.5 204.3 139.3 206.0 135.5 205.5 C131.7 205.0 129.0 203.8 126.0 201.0 C123.0 198.2 120.0 192.7 117.7 188.4 C115.5 184.1 115.5 178.8 112.5 175.0 C109.5 171.2 104.3 168.1 100.0 165.5 C95.7 162.9 90.0 161.8 86.5 159.5 C83.0 157.2 79.2 155.2 79.0 152.0Z" fill="#171b70"/>
<ellipse cx="78" cy="140.5" rx="15.4" ry="13.6" fill="#e83cb4"/>
<ellipse cx="73.5" cy="136" rx="15.5" ry="19.5" fill="#171b70"/>
<path d="M161.7 205.6 C156 205.4 149 207 143.4 210.5 C138 213.5 134 217 132 222 C128 232 127 250 126 274 C125.5 295 126 305 124.5 322 C122 345 120 358 116 372 C112 388 108 402 105 414 C103 422 100 432 102 436 C104 440 110 441 118 444 C135 449.5 160 455 178.5 454.5 C200 454 225 448 244 440 C254 434 260 428 264 421.5 C272 412 280 402 283.5 395 C284.5 392 280 388 276 383 C268 373 260 363 254 355 C246 344 236 330 225 317.2 L253 304.7 L256.3 270.3 C250 269 244 267 239 264 C232 260 227 256 223.4 251.6 C218 244 216 238 212.4 237.2 C210 232 208 229 205.3 226 C201 221 198 218.5 194 216 C190 213.5 187 212.5 183.5 211.9 Z" fill="url(#gcoat)"/>
<path d="M127 268 Q126 290 127.5 293 Q140 312 159 314 Q140 300 132.5 272 Z" fill="#171b70"/>
<path d="M152.2 223 L170.2 263.3" stroke="#171b70" stroke-width="1" fill="none"/>
<path d="M214.8 242.2 Q218.6 262 218.8 289" stroke="#171b70" stroke-width="1.1" fill="none"/>
<path d="M135.8 369 Q153 362 166.5 346.5" stroke="#171b70" stroke-width="1.3" fill="none"/>
<path d="M142.5 370.5 Q155 367 164 360 Q167.5 372 158.5 382 Q149 384 142.5 370.5Z" fill="#171b70"/>
<path d="M228 340.5 Q229 350 236 354.5 Q233 346 231.5 340Z" fill="#171b70"/>
<path d="M232.4 298 Q234 295.6 236.6 295.8 L242.8 307.4 Q242 310 238.4 310Z" fill="#171b70"/>
<circle cx="239.6" cy="306.6" r="0.9" fill="#f4c414"/>
<path d="M163 197 L161 211 Q172 222 184 213 L182 200Z" fill="#f4789c"/>
<path d="M166.5 177.0 C167.4 175.2 169.2 174.2 171.0 173.5 C172.8 172.8 174.7 172.8 177.2 172.5 C179.7 172.2 183.0 171.9 186.0 171.8 C189.0 171.7 192.9 170.8 195.0 171.8 C197.1 172.8 197.6 176.0 198.3 178.0 C199.0 180.0 199.1 182.0 199.0 183.8 C198.9 185.6 198.2 187.4 197.6 189.0 C197.0 190.6 196.4 192.1 195.5 193.6 C194.6 195.1 193.6 196.5 192.4 197.8 C191.2 199.1 189.7 200.4 188.4 201.3 C187.1 202.2 185.8 203.0 184.6 203.4 C183.4 203.8 182.7 204.1 181.4 204.0 C180.1 203.9 178.4 203.6 177.0 203.0 C175.6 202.4 174.3 201.8 173.0 200.6 C171.7 199.4 170.5 197.6 169.4 196.0 C168.3 194.4 167.2 192.8 166.6 190.8 C166.0 188.8 165.6 186.3 165.6 184.0 C165.6 181.7 165.6 178.8 166.5 177.0Z" fill="#f77fa2"/>
<ellipse cx="164.8" cy="180.2" rx="3.2" ry="2.9" fill="#f77fa2"/>
<path d="M168 176 Q175 169 194 170.5 Q199 174 198.6 181 Q202 178 203 170 L196 164 L170 165Z" fill="#171b70"/>
<path d="M165 189.6 Q167.4 196 171 200 Q175 203.6 181.4 204.4" stroke="#171b70" stroke-width="1.6" fill="none"/>
<circle cx="178.6" cy="181.3" r="0.95" fill="#171b70"/><circle cx="189.2" cy="182" r="0.95" fill="#171b70"/>
<path d="M176.8 177.6h4.6M187.4 178.8h5" stroke="#171b70" stroke-width="0.7"/>
<path d="M184.4 183.4 L183 192.2 L185.6 192Z" fill="#e4507e"/>
<path d="M179.3 193.8 Q181.4 195 183.6 194.4" stroke="#b02a60" stroke-width="1" fill="none"/>
<path d="M146.2 159.1 Q154 166.5 163.1 164 Q170 161 177.2 159.1M145.5 162.7 Q153 170.5 161.7 169 Q168 167.5 173 166.2 Q178 165.6 182.8 167.6 Q187.5 168 191.3 165.5 Q196 163 199 159.1" stroke="#f4f4ff" stroke-width="1.2" fill="none"/>
<path d="M160.6 209 Q163 217 169 219 Q174 220 178 218.6 Q182 217 184.2 212.4" stroke="#171b70" stroke-width="2.8" fill="none"/>
<path d="M159 216 Q159.6 222.6 163 224.5 Q167 227.4 170.6 226.4 Q174.6 225 175.8 221.7 Q177.6 225.4 180.6 226 Q183.6 226 185.6 223.8 Q188 221 188.4 217.5" stroke="#171b70" stroke-width="0.9" fill="none"/>
<circle cx="177.2" cy="231.6" r="0.85" fill="#171b70"/>
<ellipse cx="305.4" cy="258.5" rx="3.9" ry="9" fill="#f986a9" transform="rotate(12 305.4 258.5)"/>
<path d="M259.4 252.3 L268.8 246 L307 241.4 L293.75 254.7Z" fill="#edf6ff"/>
<path d="M266 249.6 L302 245" stroke="#cfe0fa" stroke-width="0.8" fill="none"/>
<path d="M293.75 254.7 L307 241.4 Q304 264 300 284.4 L293.75 298.4 L284.4 315.6 H281.25Z" fill="url(#gbs)"/>
<path d="M259.4 252.3 L293.75 254.7 L281.25 315.6 L252.3 312.5Z" fill="url(#gbk)"/>
<path d="M245.3 290.6 C245.8 287.5 248.4 285.2 250.0 283.0 C251.6 280.8 253.5 278.2 254.7 277.3 C255.9 276.4 257.0 276.6 257.4 277.6 C257.8 278.7 255.6 282.5 257.0 283.6 C258.4 284.7 262.7 283.5 266.0 284.0 C269.3 284.5 274.8 285.8 276.6 286.7 C278.4 287.6 277.5 288.5 277.0 289.4 C276.5 290.3 275.9 290.8 273.4 292.2 C270.9 293.6 265.6 296.3 262.0 298.0 C258.4 299.7 254.1 301.7 251.6 302.3 C249.1 302.9 247.9 303.6 246.9 301.6 C245.9 299.7 244.8 293.7 245.3 290.6Z" fill="#f986a9"/>
<path d="M370.5 157 C378 150 390 146 400 146 C415 146 428 151 438 160.5 C442 164.5 445 168.5 446.5 172.5 C440 173.5 432 172 424 168.5 C410 163 398 156 386 154 C380 153.4 375 155 370.5 157Z" fill="#f7c816"/>
<path d="M398.5 151.4 Q432 158 445 170.5 Q455 181 461 193.5" stroke="#2b2f6e" stroke-width="1.1" fill="none"/>
<path d="M366 396.5 L372.5 449 H398.5 L406 396.5Z" fill="#fff" stroke="#171b70" stroke-width="1.15"/>
<path d="M367.3 407.4 H404.7 L401.5 431 H370.3Z" fill="#f6c914"/>
<path d="M372 449 H399 L398.3 454 H372.8Z" fill="#fff" stroke="#171b70" stroke-width="1.1"/>
<path d="M363 390.5 H409 V395.8 H363Z M366.5 390.5 L368 386.6 H386.5 L388.5 384.4 H403.5 L405.5 390.5" fill="#fff" stroke="#171b70" stroke-width="1.15" stroke-linejoin="round"/>
<path d="M385 400.2h2M390 400.2h5.4M398 400.2h1.6" stroke="#171b70" stroke-width="0.9"/>
<ellipse cx="386" cy="419" rx="5.6" ry="8.6" fill="#171b70" transform="rotate(36 386 419)"/>
<path d="M390.6 412.4 Q384.4 416 386.6 419.4 Q388 423.4 381.6 426" stroke="#f6c914" stroke-width="1.2" fill="none"/>
<path d="M478 404 L505.6 437.9 L563.5 433 V500 H534 L500 470Z" fill="#2838d8"/>
<path d="M416.2 410.5 C417 404 420 401 424.4 399.3 C430 396 435 394.4 440.6 393.2 C447 391.6 453 391 458.9 391 C466 391.5 472 392 476 394 L505.6 437.9 L563.5 470 V500 H534 C530 496 526 492 521.9 487.6 C512 484 501 480 491.4 475.5 C481 470.5 470 465 460.9 459.2 C453 454.6 446 450 440.6 445 C432 438 425 431.5 420.3 424.7 C417.5 420 415.6 415 416.2 410.5Z" fill="url(#gleg)"/>
<path d="M507.6 437.9 L532 433.8 L542.2 436.9 L550.3 433.2 L563.5 433.8 V455 L548.3 466.3Z" fill="#2223a0"/>
<path d="M496.7 270.8 C488 273 478 277 472.2 282 C464 290 459 300 456.9 308.4 C453 320 451 332 451.4 341.3 C451.4 352 452.6 362 454.7 371.9 C457 381 460 388 463.5 393.8 C467 399 472 403 479 404.5 L490 398 L483.2 354.4 C485 347 486.4 340 487.5 334.7 C490 327 492.6 320 494 312.8 C495.4 302 496.2 291 496.5 281Z" fill="url(#garm)"/>
<path d="M496.7 270.8 L515.7 265.7 L563.5 268 V368 H482.5 C484 350 486 341 487.5 334.7 C490 327 492.6 320 494 312.8 C495.4 302 496.3 291 496.5 281Z" fill="url(#gvest)"/>
<path d="M539 293 Q537.4 330 537.9 358.8" stroke="#1d2a7a" stroke-width="1.1" fill="none"/>
<path d="M512.7 281 Q512.6 268 521 265.4 L563.5 264.6 V301 Q558 306.4 548.8 306.3 Q542 304 539 293 Q535 304 522.5 304.4 Q513.4 300 512.7 281Z" fill="url(#gcol)"/>
<path d="M527.5 262 L526.5 268.5 Q521 269.5 520.8 272.5 Q521.5 279 526 283 Q533 289 540 288.8 Q549 288.6 555 283 Q560 278 560.4 271 Q560 268.6 554 268 L552.5 262Z" fill="#f77fa2"/>
<path d="M520.0 240.0 C519.7 236.7 520.0 232.9 521.0 230.0 C522.0 227.1 523.5 223.6 526.0 222.7 C528.5 221.8 532.3 223.2 536.3 224.4 C540.3 225.6 546.3 227.6 550.0 229.6 C553.7 231.6 556.5 234.5 558.7 236.4 C560.9 238.3 562.5 238.9 563.0 241.0 C563.5 243.1 562.3 246.7 561.5 249.0 C560.7 251.3 559.3 253.2 558.0 255.0 C556.7 256.8 555.2 257.7 553.5 259.5 C551.8 261.3 550.0 264.4 548.0 266.0 C546.0 267.6 543.7 268.8 541.5 269.0 C539.3 269.2 537.0 268.5 535.0 267.5 C533.0 266.5 531.0 264.4 529.5 263.0 C528.0 261.6 527.1 261.0 526.0 258.8 C524.9 256.6 524.0 253.1 523.0 250.0 C522.0 246.9 520.3 243.3 520.0 240.0Z" fill="#f77fa2"/>
<path d="M520 236 L563.5 236 V224 L540 216 L522 222Z" fill="#f77fa2"/>
<path d="M526 258.8 Q527.5 258.5 529.4 260.5 Q534 265 539.7 265.6 Q546 265.4 551.8 261 Q552.8 259.6 553.5 258.8 Q553.4 264 549 267.8 Q545 271.4 541.5 271.4 Q536 271.2 531.5 267 Q527.5 263 526 258.8Z" fill="#151a5e"/>
<path d="M513.0 217.5 C513.3 215.2 514.2 212.5 515.5 210.5 C516.8 208.5 518.9 206.8 520.8 205.5 C522.7 204.2 525.0 203.1 527.0 202.4 C529.0 201.7 531.1 201.2 532.9 201.2 C534.7 201.2 536.3 202.9 538.0 202.6 C539.7 202.3 541.3 200.2 543.0 199.4 C544.7 198.6 546.6 197.8 548.3 197.7 C550.0 197.6 551.5 198.3 553.0 199.0 C554.5 199.7 555.8 200.7 557.0 202.0 C558.2 203.3 558.5 205.0 560.0 207.0 C561.5 209.0 565.0 208.2 566.0 214.0 C567.0 219.8 567.2 238.3 566.0 242.0 C564.8 245.7 561.4 238.5 558.7 236.4 C556.0 234.3 552.6 231.3 550.0 229.6 C547.4 227.9 545.3 227.3 543.0 226.4 C540.7 225.5 538.5 224.9 536.3 224.4 C534.1 223.9 531.7 223.7 530.0 223.4 C528.3 223.1 527.1 222.3 526.0 222.7 C524.9 223.1 524.1 224.4 523.4 226.0 C522.7 227.6 522.1 229.6 521.6 232.0 C521.1 234.4 521.1 239.7 520.4 240.4 C519.7 241.1 518.4 237.9 517.6 236.4 C516.8 234.9 516.4 233.4 515.7 231.3 C515.0 229.2 514.1 226.3 513.6 224.0 C513.1 221.7 512.7 219.8 513.0 217.5Z" fill="url(#ghair)"/>
<circle cx="532" cy="239.6" r="1" fill="#171b70"/><circle cx="546.6" cy="239.1" r="1" fill="#171b70"/>
<path d="M528.6 236.1h6.8M543.2 235.7h6.8" stroke="#171b70" stroke-width="1.15"/>
<path d="M539.6 240 L538.6 249.3 L541.4 249.2Z" fill="#e6588a"/>
<path d="M536.3 253.4 Q539.8 256.2 543.2 253.6 Q539.8 254.8 536.3 253.4Z" fill="#fff" stroke="#fff" stroke-width="0.5"/>
<path d="M473.3 363.5 Q473.6 361.4 476 361 Q482 359.6 487.5 358.8 Q500 356.4 513.8 356.1 Q522 356.6 529.1 358.8 Q535 360.6 540 364.2 Q545 358 551 355.5 L563.5 354.4 V433.8 L550.3 433.2 L542.2 436.9 L532 433.8 L505.6 437.9 L481.2 413.5 Q478 395 475.5 376.3Z" fill="url(#gbook)"/>
<path d="M478.8 362 Q500 358 514 358 Q524 358.6 529 360.4 Q532.6 364 533.5 372 Q536.6 398 539.6 435" stroke="#2e2a4a" stroke-width="1.1" fill="none"/>
<path d="M551 360.5H563.5" stroke="#2e2a4a" stroke-width="1.1" fill="none"/>
<path d="M467.8 385.0 C468.1 382.6 469.3 380.8 470.6 379.4 C471.9 377.9 473.7 376.6 475.5 376.3 C477.3 376.0 479.6 376.7 481.6 377.4 C483.6 378.1 485.5 379.2 487.5 380.7 C489.5 382.2 491.8 384.4 493.6 386.6 C495.4 388.8 497.7 391.9 498.5 393.8 C499.3 395.7 499.0 396.9 498.6 398.0 C498.2 399.1 498.6 399.8 496.3 400.4 C494.0 401.0 488.6 401.4 485.0 401.6 C481.4 401.8 476.8 402.0 474.4 401.4 C472.0 400.8 471.5 399.3 470.6 398.0 C469.7 396.7 469.5 396.0 469.0 393.8 C468.5 391.6 467.5 387.4 467.8 385.0Z" fill="#f986a9"/>
</svg>
<!-- dock background -->
<div style="left:572px;top:74px;width:348px;height:436px;background:#3c3c3c"></div>
<div style="left:574px;top:74px;width:202.5px;height:6px;background:#474747"></div>
<div style="left:778.5px;top:74px;width:141.5px;height:6px;background:#474747"></div>
<span class="t" style="left:768.5px;top:72.6px;font-size:6px;color:#c8c8c8;line-height:8px">«</span>
<span class="t" style="left:913px;top:72.6px;font-size:6px;color:#c8c8c8;line-height:8px">»</span>

<!-- COLOR panel -->
<div class="bar" style="left:574px;top:80px;width:202.5px;height:17.5px"></div>
<div class="tab" style="left:574px;top:80.5px;width:28px;height:17px"></div>
<span class="t dim" style="left:576.5px;top:83px;font-size:5px;color:#8a8a8a;letter-spacing:-0.5px">⋮</span>
<span class="t b" style="left:582.5px;top:84px;font-size:6.5px;transform:scaleX(0.795);transform-origin:0 50%">Color</span>
<span class="t dim" style="left:608px;top:84px;font-size:6.5px;transform:scaleX(0.865);transform-origin:0 50%">Color Guide</span>
<svg style="left:765.5px;top:85.5px" width="7" height="6" viewBox="0 0 7 6"><path d="M0 0.6H7M0 3H7M0 5.4H7" stroke="#7c7c7c" stroke-width="1"/></svg>
<div style="left:574px;top:97.5px;width:202.5px;height:86px;background:#535353"></div>
<svg style="left:577px;top:101px" width="24" height="8" viewBox="0 0 24 8"><rect x="0" y="0" width="7.6" height="7.6" fill="#fff"/><path d="M0.3 7.3L7.3 0.3" stroke="#f00" stroke-width="1.5"/><rect x="7.6" y="0" width="7.6" height="7.6" fill="#000"/><rect x="15.2" y="0" width="7.6" height="7.6" fill="#fff"/></svg>
<div style="left:577.5px;top:115.5px;width:188px;height:63.5px;border:1px solid #3e3e3e;background:linear-gradient(180deg,rgba(255,255,255,1) 0%,rgba(255,255,255,0.82) 8%,rgba(255,255,255,0.35) 25%,rgba(255,255,255,0) 45%,rgba(0,0,0,0) 50%,rgba(0,0,0,0.35) 72%,rgba(0,0,0,0.8) 90%,rgba(0,0,0,1) 100%),linear-gradient(90deg,#ee1c25 0%,#f7841d 8%,#fff200 15.5%,#b2d235 23%,#3fae49 33%,#17a66a 42%,#18ab9f 49%,#27aae1 54.5%,#3a6cb8 61%,#3f4fa2 68%,#5c3f98 75%,#93399a 82%,#e0108e 91%,#ed1c3a 100%)"></div>

<!-- SWATCHES panel -->
<div class="bar" style="left:574px;top:184.5px;width:202.5px;height:16px"></div>
<div class="tab" style="left:574px;top:185px;width:36.5px;height:15.5px"></div>
<span class="t b" style="left:579.5px;top:188px;font-size:6.5px;transform:scaleX(0.817);transform-origin:0 50%">Swatches</span>
<span class="t dim" style="left:615px;top:188px;font-size:6.5px;transform:scaleX(0.838);transform-origin:0 50%">Brushes</span>
<span class="t dim" style="left:646.75px;top:188px;font-size:6.5px;transform:scaleX(0.852);transform-origin:0 50%">Symbols</span>
<svg style="left:765.5px;top:189.5px" width="7" height="6" viewBox="0 0 7 6"><path d="M0 0.6H7M0 3H7M0 5.4H7" stroke="#7c7c7c" stroke-width="1"/></svg>
<div style="left:574px;top:200.5px;width:202.5px;height:66.5px;background:#535353"></div>
<svg style="left:583.5px;top:209.5px" width="11" height="11" viewBox="0 0 11 11"><rect x="0.4" y="0.4" width="10.2" height="10.2" fill="#fff" stroke="#999" stroke-width="0.8"/><rect x="3.2" y="3.2" width="4.6" height="4.6" fill="#535353"/><path d="M0.8 10.2L10.2 0.8" stroke="#f00" stroke-width="1.4"/></svg>
<div style="left:577.5px;top:204.5px;width:10.5px;height:10.5px;background:#fb0505;border:1px solid #b07070"></div>
<div style="left:745px;top:203.5px;width:12px;height:13.5px;background:#2d2d2d"></div>
<svg style="left:747px;top:206px" width="8" height="9" viewBox="0 0 8 9"><path d="M0 0.8H8M0 3.2H8M0 5.6H8M0 8H8" stroke="#e6e6e6" stroke-width="1.3"/></svg>
<svg style="left:761px;top:206px" width="9" height="9" viewBox="0 0 9 9"><g fill="#dedede"><rect x="0" y="0" width="2.3" height="2.3"/><rect x="3.2" y="0" width="2.3" height="2.3"/><rect x="6.4" y="0" width="2.3" height="2.3"/><rect x="0" y="3.2" width="2.3" height="2.3"/><rect x="3.2" y="3.2" width="2.3" height="2.3"/><rect x="6.4" y="3.2" width="2.3" height="2.3"/><rect x="0" y="6.4" width="2.3" height="2.3"/><rect x="3.2" y="6.4" width="2.3" height="2.3"/><rect x="6.4" y="6.4" width="2.3" height="2.3"/></g></svg>
<div class="sep" style="left:576px;top:223.5px;width:193px;background:#4b4b4b"></div>
<svg style="left:591px;top:225.5px" width="8" height="8" viewBox="0 0 8 8"><rect width="8" height="8" fill="#fff"/><path d="M0.3 7.7L7.7 0.3" stroke="#f00" stroke-width="1.5"/></svg>
<span class="t" style="left:603px;top:225.8px;font-size:6.6px;color:#c4c4c4;transform:scaleX(0.9);transform-origin:0 50%">[None]</span>
<svg style="left:762px;top:226px" width="8" height="8" viewBox="0 0 8 8"><rect x="1.2" y="1.2" width="5.6" height="5.6" class="ic" stroke-width="0.8"/><path d="M0.5 0.5L7.5 7.5M7.5 0.5L0.5 7.5" class="ic" stroke-width="0.8"/></svg>
<div class="sep" style="left:576px;top:235.5px;width:193px;background:#4b4b4b"></div>
<div style="left:591px;top:237.5px;width:8px;height:8px;background:#000"></div>
<span class="t" style="left:603px;top:237.8px;font-size:6.6px;color:#c4c4c4;transform:scaleX(0.875);transform-origin:0 50%">[Registration]</span>
<svg style="left:762px;top:238px" width="8" height="8" viewBox="0 0 8 8"><rect x="0.5" y="0.5" width="7" height="7" class="ic" stroke-width="0.8"/><path d="M4 0.5V7.5M0.5 4H7.5" class="ic" stroke-width="0.8"/></svg>
<div class="sep" style="left:576px;top:247.5px;width:193px;background:#4b4b4b"></div>
<!-- swatches footer icons -->
<svg style="left:580px;top:257px" width="9" height="8" viewBox="0 0 9 8"><path d="M0.6 7.4V1.4H2V7.4M2.6 7.4V0.6H4.2V7.4M4.8 7.2L3.8 1.6L5.2 1.2L6.4 6.8Z" fill="#d4d4d4"/><rect x="7.4" y="6.4" width="1.2" height="1.2" fill="#d4d4d4"/></svg>
<svg style="left:596.5px;top:257px" width="8" height="8" viewBox="0 0 8 8"><rect x="0.5" y="0.5" width="5" height="5" fill="none" stroke="#6b6b6b"/><rect x="2.5" y="2.5" width="5" height="5" fill="#6b6b6b"/></svg>
<svg style="left:692px;top:257px" width="10" height="8" viewBox="0 0 10 8"><g fill="#d4d4d4"><rect x="0" y="0" width="3" height="3"/><rect x="3.8" y="0" width="3" height="3"/><rect x="0" y="3.8" width="3" height="3"/><rect x="3.8" y="3.8" width="3" height="3"/><rect x="8.2" y="6.4" width="1.3" height="1.3"/></g></svg>
<svg style="left:707px;top:257px" width="9" height="8" viewBox="0 0 9 8"><g fill="#686868"><rect x="0" y="0" width="3.4" height="3.4"/><rect x="4.4" y="0" width="3.4" height="3.4"/><rect x="0" y="4.4" width="3.4" height="3.4"/><rect x="4.4" y="4.4" width="3.4" height="3.4"/></g></svg>
<svg style="left:721.5px;top:257px" width="9" height="8" viewBox="0 0 9 8"><path d="M0.3 7.6V0.6H3.4L4.4 1.8H8.7V7.6Z" fill="#d4d4d4"/></svg>
<svg style="left:737.5px;top:257px" width="8" height="8" viewBox="0 0 8 8"><rect x="0.5" y="0.5" width="7" height="7" class="ic"/><path d="M4 2.2V5.8M2.2 4H5.8" class="ic"/></svg>
<svg style="left:752.5px;top:256.5px" width="7" height="9" viewBox="0 0 7 9"><path d="M0.3 1.8H6.7M2.4 1.6V0.5H4.6V1.6M1 2.4L1.4 8.5H5.6L6 2.4Z" fill="#656565" stroke="#656565" stroke-width="0.6"/></svg>

<!-- STROKE panel -->
<div style="left:574px;top:267px;width:202.5px;height:1.5px;background:#3a3a3a"></div>
<div class="bar" style="left:574px;top:268.5px;width:202.5px;height:16px"></div>
<div class="tab" style="left:574px;top:269px;width:32.5px;height:15.5px"></div>
<span class="t dim" style="left:576.5px;top:271.5px;font-size:5px;color:#c0c0c0;letter-spacing:-0.5px">⋮</span>
<span class="t b" style="left:583px;top:272px;font-size:6.5px;transform:scaleX(0.815);transform-origin:0 50%">Stroke</span>
<span class="t dim" style="left:611.75px;top:272px;font-size:6.5px;transform:scaleX(0.882);transform-origin:0 50%">Gradient</span>
<span class="t dim" style="left:645.75px;top:272px;font-size:6.5px;color:#b0b0b0;transform:scaleX(0.854);transform-origin:0 50%">Transparency</span>
<svg style="left:765.5px;top:273.5px" width="7" height="6" viewBox="0 0 7 6"><path d="M0 0.6H7M0 3H7M0 5.4H7" stroke="#7c7c7c" stroke-width="1"/></svg>
<div style="left:574px;top:284.5px;width:202.5px;height:17.5px;background:#535353"></div>
<span class="t dim" style="left:577px;top:289px;font-size:6.5px;color:#b0b0b0;transform:scaleX(0.912);transform-origin:0 50%">Weight:</span>
<svg style="left:601px;top:287.5px" width="6" height="11" viewBox="0 0 6 11"><path d="M0.7 3.6L3 1.2L5.3 3.6M0.7 7.4L3 9.8L5.3 7.4" class="ic" stroke-width="1.1"/></svg>
<div class="fld" style="left:609px;top:287.5px;width:29px;height:11.5px"></div>
<svg style="left:640.5px;top:291px" width="6" height="4" viewBox="0 0 6 4"><path d="M0.6 0.6L3 3L5.4 0.6" class="ic" stroke-width="1.1"/></svg>

<!-- APPEARANCE panel -->
<div style="left:574px;top:302px;width:202.5px;height:1.5px;background:#3a3a3a"></div>
<div class="bar" style="left:574px;top:303.5px;width:202.5px;height:16px"></div>
<div class="tab" style="left:574px;top:304px;width:41.5px;height:15.5px"></div>
<span class="t b" style="left:579.5px;top:307px;font-size:6.5px;transform:scaleX(0.806);transform-origin:0 50%">Appearance</span>
<span class="t dim" style="left:621px;top:307px;font-size:6.5px;transform:scaleX(0.863);transform-origin:0 50%">Graphic Styles</span>
<svg style="left:765.5px;top:308.5px" width="7" height="6" viewBox="0 0 7 6"><path d="M0 0.6H7M0 3H7M0 5.4H7" stroke="#7c7c7c" stroke-width="1"/></svg>
<div style="left:574px;top:319.5px;width:202.5px;height:65.5px;background:#535353"></div>
<div style="left:579px;top:323.5px;width:10.5px;height:4.5px;background:#fb0505"></div>
<div style="left:606px;top:322px;width:14px;height:3.5px;overflow:hidden"><span class="t b" style="left:0;top:-4.5px;font-size:6.5px">Path</span></div>
<div class="sep" style="left:576px;top:329.5px;width:188px;background:#4a4a4a"></div>
<div class="sep" style="left:576px;top:343.5px;width:188px;background:#4a4a4a"></div>
<div class="sep" style="left:576px;top:357.5px;width:188px;background:#4a4a4a"></div>
<div class="sep" style="left:576px;top:371.5px;width:188px;background:#4a4a4a"></div>
<div style="left:591.5px;top:329.5px;width:1px;height:42px;background:#4a4a4a"></div>
<svg style="left:579px;top:333.5px" width="10" height="6" viewBox="0 0 10 6"><path d="M0.4 3Q5 -2.2 9.6 3Q5 8.2 0.4 3Z" fill="#cfcfcf"/><circle cx="5" cy="3" r="1.7" fill="#535353"/><circle cx="5" cy="3" r="0.8" fill="#cfcfcf"/></svg>
<svg style="left:579px;top:347.5px" width="10" height="6" viewBox="0 0 10 6"><path d="M0.4 3Q5 -2.2 9.6 3Q5 8.2 0.4 3Z" fill="#cfcfcf"/><circle cx="5" cy="3" r="1.7" fill="#535353"/><circle cx="5" cy="3" r="0.8" fill="#cfcfcf"/></svg>
<svg style="left:579px;top:361.5px" width="10" height="6" viewBox="0 0 10 6"><path d="M0.4 3Q5 -2.2 9.6 3Q5 8.2 0.4 3Z" fill="#626262"/></svg>
<svg style="left:595px;top:334px" width="4" height="6" viewBox="0 0 4 6"><path d="M0.6 0.6L3 3L0.6 5.4" class="ic" stroke-width="1.1"/></svg>
<svg style="left:595px;top:348px" width="4" height="6" viewBox="0 0 4 6"><path d="M0.6 0.6L3 3L0.6 5.4" class="ic" stroke-width="1.1"/></svg>
<span class="t u" style="left:606px;top:333px;font-size:6.5px;transform:scaleX(0.862);transform-origin:0 50%">Stroke:</span>
<svg style="left:630.5px;top:332px" width="10" height="10" viewBox="0 0 10 10"><rect x="0.5" y="0.5" width="9" height="9" fill="#f4f4f4" stroke="#7a7a7a"/><path d="M1.4 8.6L8.6 1.4" stroke="#f00" stroke-width="1.4"/></svg>
<span class="t" style="left:606px;top:347px;font-size:6.5px;color:#c4c4c4;transform:scaleX(0.94);transform-origin:0 50%">Fill:</span>
<div style="left:630.5px;top:346px;width:10px;height:10px;background:#fb0505;border:1.5px solid #8a8a8a"></div>
<span class="t u" style="left:606px;top:361px;font-size:6.5px;transform:scaleX(0.881);transform-origin:0 50%">Opacity:</span>
<span class="t" style="left:630px;top:361px;font-size:6.5px;transform:scaleX(0.873);transform-origin:0 50%">Default</span>
<!-- appearance scrollbar -->
<div style="left:764.5px;top:322px;width:7.5px;height:49.5px;background:#4a4a4a"></div>
<svg style="left:765px;top:322.5px" width="6" height="4" viewBox="0 0 6 4"><path d="M0.6 3.2L3 0.8L5.4 3.2" fill="none" stroke="#7e7e7e" stroke-width="1"/></svg>
<div style="left:765.5px;top:327.5px;width:5.5px;height:38px;background:#5e5e5e;border-radius:3px"></div>
<svg style="left:765px;top:367px" width="6" height="4" viewBox="0 0 6 4"><path d="M0.6 0.8L3 3.2L5.4 0.8" fill="none" stroke="#7e7e7e" stroke-width="1"/></svg>
<!-- appearance footer -->
<svg style="left:580.5px;top:375.5px" width="8" height="8" viewBox="0 0 8 8"><rect x="0.8" y="0.8" width="6.4" height="6.4" fill="none" stroke="#e4e4e4" stroke-width="1.3"/></svg>
<div style="left:595.5px;top:375.5px;width:7.5px;height:8px;background:linear-gradient(180deg,#b9b9b9,#7e7e7e)"></div>
<span class="t" style="left:611px;top:374.5px;font-size:8.5px;font-style:italic;font-family:'Liberation Serif',serif;color:#dcdcdc;line-height:9px">fx<i class="t" style="position:static;font-size:5px">▾</i></span>
<svg style="left:722.5px;top:375.5px" width="8" height="8" viewBox="0 0 8 8"><circle cx="4" cy="4" r="3.2" fill="none" stroke="#e4e4e4" stroke-width="1.1"/><path d="M1.8 1.8L6.2 6.2" stroke="#e4e4e4" stroke-width="1.1"/></svg>
<svg style="left:738px;top:375.5px" width="8" height="8" viewBox="0 0 8 8"><rect x="0.5" y="0.5" width="7" height="7" fill="none" stroke="#646464"/><path d="M4 2.2V5.8M2.2 4H5.8" stroke="#646464"/></svg>
<svg style="left:752.5px;top:375px" width="7" height="9" viewBox="0 0 7 9"><path d="M0.3 1.8H6.7M2.4 1.6V0.5H4.6V1.6M1 2.4L1.4 8.5H5.6L6 2.4Z" fill="#626262" stroke="#626262" stroke-width="0.6"/></svg>

<!-- LAYERS panel -->
<div style="left:574px;top:385px;width:202.5px;height:1.5px;background:#3a3a3a"></div>
<div class="bar" style="left:574px;top:386.5px;width:202.5px;height:16px"></div>
<div class="tab" style="left:574px;top:387px;width:27px;height:15.5px"></div>
<span class="t b" style="left:579.5px;top:390px;font-size:6.5px;transform:scaleX(0.763);transform-origin:0 50%">Layers</span>
<span class="t dim" style="left:606.75px;top:390px;font-size:6.5px;transform:scaleX(0.868);transform-origin:0 50%">Asset Export</span>
<span class="t dim" style="left:650.5px;top:390px;font-size:6.5px;transform:scaleX(0.905);transform-origin:0 50%">Artboards</span>
<svg style="left:765.5px;top:391.5px" width="7" height="6" viewBox="0 0 7 6"><path d="M0 0.6H7M0 3H7M0 5.4H7" stroke="#7c7c7c" stroke-width="1"/></svg>
<div style="left:574px;top:402.5px;width:202.5px;height:89px;background:#535353"></div>
<div style="left:576.5px;top:405px;width:195px;height:12.5px;background:#4a6480"></div>
<div class="sep" style="left:576.5px;top:417.5px;width:195px;background:#474747"></div>
<div class="sep" style="left:576.5px;top:429.5px;width:195px;background:#474747"></div>
<svg style="left:578.5px;top:408.5px" width="10" height="6" viewBox="0 0 10 6"><path d="M0.4 3Q5 -2.2 9.6 3Q5 8.2 0.4 3Z" fill="#d6d6d6"/><circle cx="5" cy="3" r="1.7" fill="#4a6480"/><circle cx="5" cy="3" r="0.8" fill="#d6d6d6"/></svg>
<svg style="left:578.5px;top:420.5px" width="10" height="6" viewBox="0 0 10 6"><path d="M0.4 3Q5 -2.2 9.6 3Q5 8.2 0.4 3Z" fill="#cfcfcf"/><circle cx="5" cy="3" r="1.7" fill="#535353"/><circle cx="5" cy="3" r="0.8" fill="#cfcfcf"/></svg>
<div style="left:601.5px;top:406px;width:2px;height:10.5px;background:#f4453f"></div>
<div style="left:601.5px;top:418.5px;width:2px;height:10.5px;background:#4d7cf0"></div>
<svg style="left:608px;top:408.5px" width="4" height="6" viewBox="0 0 4 6"><path d="M0.6 0.6L3 3L0.6 5.4" class="ic" stroke-width="1.1"/></svg>
<svg style="left:608px;top:420.5px" width="4" height="6" viewBox="0 0 4 6"><path d="M0.6 0.6L3 3L0.6 5.4" class="ic" stroke-width="1.1"/></svg>
<div style="left:618.5px;top:406px;width:11px;height:10.5px;background:#fbfbfb;border:1px solid #2a2a2a"></div>
<div style="left:623.7px;top:407px;width:0.7px;height:8.5px;background:#f3b6b6"></div>
<div style="left:618.5px;top:418.5px;width:11px;height:10.5px;background:#fbfbfb;border:1px solid #2a2a2a"></div>
<div style="left:621px;top:421px;width:2.5px;height:5px;background:#f2c21c"></div>
<div style="left:624.5px;top:422.5px;width:3px;height:4px;background:#3b32c4"></div>
<div style="left:622px;top:419.8px;width:2px;height:1.6px;background:#1a1a70"></div>
<span class="t" style="left:632px;top:407px;font-size:6.5px;transform:scaleX(0.853);transform-origin:0 50%">Layer 2</span>
<span class="t" style="left:632px;top:419.3px;font-size:6.5px;transform:scaleX(0.853);transform-origin:0 50%">Layer 1</span>
<svg style="left:754.5px;top:408.5px" width="6" height="6" viewBox="0 0 6 6"><circle cx="3" cy="3" r="2.2" fill="none" stroke="#dadada" stroke-width="1"/></svg>
<svg style="left:754.5px;top:420.5px" width="6" height="6" viewBox="0 0 6 6"><circle cx="3" cy="3" r="2.2" fill="none" stroke="#dadada" stroke-width="1"/></svg>
<div style="left:763.5px;top:409.5px;width:4px;height:4px;background:#fb2a2a"></div>
<svg style="left:768px;top:405px" width="4" height="4" viewBox="0 0 4 4"><path d="M0.4 0.4H3.6V3.6Z" fill="#e6e6e6"/></svg>
<div style="left:771.5px;top:403.5px;width:1px;height:74px;background:#484848"></div>
<div class="sep" style="left:574px;top:477.5px;width:202.5px;background:#474747"></div>
<span class="t" style="left:577px;top:480.3px;font-size:6.6px;color:#c4c4c4;transform:scaleX(0.86);transform-origin:0 50%">2 Layers</span>
<svg style="left:677.5px;top:480px" width="9" height="9" viewBox="0 0 9 9"><path d="M4 1.6H0.6V8.4H7.4V5" class="ic"/><path d="M3.6 5.4L8 1M8 1H5.2M8 1V3.8" class="ic"/></svg>
<svg style="left:692.5px;top:480px" width="9" height="9" viewBox="0 0 9 9"><circle cx="3.6" cy="3.6" r="2.6" class="ic" stroke-width="1.2"/><path d="M5.4 5.4L8.4 8.4" class="ic" stroke-width="1.5"/></svg>
<svg style="left:707px;top:480.5px" width="8" height="8" viewBox="0 0 8 8"><rect x="0.5" y="0.5" width="6" height="6" fill="#8d8d8d" stroke="#d6d6d6"/><path d="M7.5 2V7.5H2" class="ic"/><rect x="2.2" y="2.2" width="2.6" height="2.6" fill="#d6d6d6"/></svg>
<svg style="left:720px;top:480.5px" width="11" height="8" viewBox="0 0 11 8"><path d="M0.6 0.8L3.4 3.6" class="ic"/><path d="M2 0.4L0.4 0.4L0.4 2" class="ic" stroke-width="0.8"/><rect x="3.6" y="1.2" width="6.8" height="6" class="ic"/><rect x="5.4" y="2.8" width="3.2" height="2.8" fill="#d6d6d6"/></svg>
<svg style="left:737.5px;top:480.5px" width="8" height="8" viewBox="0 0 8 8"><rect x="0.5" y="0.5" width="7" height="7" class="ic"/><rect x="2.6" y="2.6" width="2.8" height="2.8" fill="#d6d6d6"/></svg>
<svg style="left:752.5px;top:480px" width="7" height="9" viewBox="0 0 7 9"><path d="M0.3 1.8H6.7M2.4 1.6V0.5H4.6V1.6M1 2.4L1.4 8.5H5.6L6 2.4Z" fill="#bdbdbd" stroke="#bdbdbd" stroke-width="0.6"/><path d="M2.6 3.4V7.4M4.4 3.4V7.4" stroke="#535353" stroke-width="0.7"/></svg>

<!-- COMMENTS -->
<div style="left:574px;top:491px;width:202.5px;height:1.5px;background:#3a3a3a"></div>
<div class="bar" style="left:574px;top:492.5px;width:202.5px;height:17.5px"></div>
<div class="tab" style="left:574px;top:493px;width:38.5px;height:17px"></div>
<span class="t b" style="left:579.5px;top:495.5px;font-size:6.5px;transform:scaleX(0.833);transform-origin:0 50%">Comments</span>

<!-- PROPERTIES column -->
<div class="bar" style="left:778.5px;top:80px;width:141.5px;height:17.5px"></div>
<div class="tab" style="left:778.5px;top:80.5px;width:37px;height:17px"></div>
<span class="t b" style="left:782.5px;top:84px;font-size:6.5px;transform:scaleX(0.843);transform-origin:0 50%">Properties</span>
<span class="t dim" style="left:820.4px;top:84px;font-size:6.5px;transform:scaleX(0.854);transform-origin:0 50%">Libraries</span>
<div style="left:778.5px;top:97.5px;width:141.5px;height:412.5px;background:#535353"></div>
<span class="t dim" style="left:783px;top:102px;font-size:6.5px;color:#a8a8a8;transform:scaleX(0.838);transform-origin:0 50%">Line</span>
<div class="sep" style="left:783px;top:114.5px;width:130px;background:#4c4c4c"></div>
<span class="t dim" style="left:783px;top:122px;font-size:6.5px;color:#b2b2b2;transform:scaleX(0.861);transform-origin:0 50%">Transform</span>
<!-- ref point -->
<svg style="left:782.5px;top:140.5px" width="13" height="13" viewBox="0 0 13 13"><rect x="0" y="0" width="13" height="13" fill="#2e2e2e"/><g fill="#e8e8e8"><rect x="1" y="1" width="2.6" height="2.6"/><rect x="5.2" y="1" width="2.6" height="2.6"/><rect x="9.4" y="1" width="2.6" height="2.6"/><rect x="1" y="5.2" width="2.6" height="2.6"/><rect x="9.4" y="5.2" width="2.6" height="2.6"/><rect x="1" y="9.4" width="2.6" height="2.6"/><rect x="5.2" y="9.4" width="2.6" height="2.6"/><rect x="9.4" y="9.4" width="2.6" height="2.6"/></g><rect x="4.6" y="4.6" width="3.8" height="3.8" fill="#fff"/></svg>
<span class="t dim" style="left:800.5px;top:136px;font-size:6.6px;color:#bcbcbc">X:</span>
<div class="fld" style="left:809px;top:133.5px;width:31px;height:11.5px"></div>
<span class="t" style="left:811.7px;top:135px;font-size:6.7px;font-weight:bold;color:#d8d8d8;transform:scaleX(0.863);transform-origin:0 50%">237,6383 |</span>
<span class="t dim" style="left:849px;top:136px;font-size:6.6px;color:#bcbcbc">W:</span>
<div class="fld" style="left:860px;top:133.5px;width:31.5px;height:11.5px"></div>
<span class="t" style="left:862px;top:135px;font-size:6.7px;font-weight:bold;color:#d8d8d8;transform:scaleX(0.846);transform-origin:0 50%">0,5106 px</span>
<span class="t dim" style="left:800.5px;top:151px;font-size:6.6px;color:#bcbcbc">Y:</span>
<div class="fld" style="left:809px;top:148.5px;width:31px;height:11.5px"></div>
<span class="t" style="left:811.7px;top:150px;font-size:6.7px;font-weight:bold;color:#d8d8d8;transform:scaleX(0.863);transform-origin:0 50%">398,9787 |</span>
<span class="t dim" style="left:850px;top:151px;font-size:6.6px;color:#bcbcbc">H:</span>
<div class="fld" style="left:860px;top:148.5px;width:31.5px;height:11.5px"></div>
<span class="t" style="left:862px;top:150px;font-size:6.7px;font-weight:bold;color:#d8d8d8;transform:scaleX(0.854);transform-origin:0 50%">241,0213 |</span>
<svg style="left:900px;top:142.5px" width="10" height="12" viewBox="0 0 10 12"><path d="M3.2 4.6L2.2 3.2Q1.6 1.6 3 1Q4.4 0.6 5.2 2L6 3.4M6.8 7.4L7.8 8.8Q8.4 10.4 7 11Q5.6 11.4 4.8 10L4 8.6" class="ic" stroke-width="1.1"/><path d="M0.8 1.6L9.2 10.4" class="ic" stroke-width="1"/></svg>
<svg style="left:797.5px;top:163.5px" width="8" height="8" viewBox="0 0 8 8"><path d="M0.4 7.2H7.6L3.2 1.2" class="ic" stroke-width="0.9"/><path d="M4.6 7.2Q4.6 5.4 3.4 4.4" class="ic" stroke-width="0.8"/></svg>
<div class="fld" style="left:807.5px;top:164.5px;width:31px;height:11px"></div>
<span class="t" style="left:809.6px;top:165.5px;font-size:6.7px;font-weight:bold;color:#d8d8d8;transform:scaleX(0.85);transform-origin:0 50%">89,879</span>
<svg style="left:830.5px;top:168px" width="6" height="4" viewBox="0 0 6 4"><path d="M0.6 0.6L3 3L5.4 0.6" class="ic" stroke-width="1.1"/></svg>
<svg style="left:863.5px;top:166.5px" width="9" height="8" viewBox="0 0 9 8"><path d="M0.5 1V7L3.5 4ZM8.5 1V7L5.5 4Z" fill="#d2d2d2"/><path d="M4.5 0V8" stroke="#d2d2d2" stroke-width="0.7"/></svg>
<svg style="left:877px;top:165.5px" width="8" height="10" viewBox="0 0 8 10"><path d="M1 0.5H7L4 4ZM1 9.5H7L4 6Z" fill="#d2d2d2"/><path d="M0 5H8" stroke="#d2d2d2" stroke-width="0.7"/></svg>
<span class="t" style="left:901px;top:176.5px;font-size:9px;letter-spacing:0.3px;line-height:9px;font-weight:bold;color:#d6d6d6">...</span>
<div class="sep" style="left:783px;top:188.5px;width:130px;background:#4c4c4c"></div>

<span class="t dim" style="left:783px;top:195px;font-size:6.5px;color:#b2b2b2;transform:scaleX(0.827);transform-origin:0 50%">Appearance</span>
<div style="left:784px;top:211px;width:9.5px;height:9.5px;background:#fb0505"></div>
<span class="t dim" style="left:800.6px;top:212.5px;font-size:6.5px;color:#a2a2a2;transform:scaleX(0.77);transform-origin:0 50%">Fill</span>
<svg style="left:783.5px;top:227.5px" width="10.5" height="10.5" viewBox="0 0 10.5 10.5"><rect x="0.5" y="0.5" width="9.5" height="9.5" fill="#f6f6f6" stroke="#777"/><rect x="2.8" y="2.8" width="4.9" height="4.9" fill="#222"/><rect x="4" y="4" width="2.5" height="2.5" fill="#f6f6f6"/><path d="M0.8 9.7L9.7 0.8" stroke="#f00" stroke-width="1.4"/></svg>
<span class="t u b" style="left:800px;top:229px;font-size:6.5px;transform:scaleX(0.803);transform-origin:0 50%">Stroke</span>
<svg style="left:830.5px;top:227.5px" width="6" height="11" viewBox="0 0 6 11"><path d="M0.7 3.6L3 1.2L5.3 3.6M0.7 7.4L3 9.8L5.3 7.4" class="ic" stroke-width="1.1"/></svg>
<div class="fld" style="left:838.5px;top:227px;width:19.5px;height:11.5px"></div>
<svg style="left:859px;top:230.5px" width="6" height="4" viewBox="0 0 6 4"><path d="M0.6 0.6L3 3L5.4 0.6" class="ic" stroke-width="1.1"/></svg>
<svg style="left:783.5px;top:244px" width="10.5" height="10.5" viewBox="0 0 10.5 10.5"><rect x="0.5" y="0.5" width="9.5" height="9.5" fill="#5c5c5c" stroke="#909090"/><path d="M2.5 3.5h1M6.5 3.5h1M4.5 5.5h1M2.5 7.5h1M6.5 7.5h1" stroke="#8a8a8a"/></svg>
<span class="t u b" style="left:800px;top:245.5px;font-size:6.5px;transform:scaleX(0.814);transform-origin:0 50%">Opacity</span>
<div class="fld" style="left:829px;top:243.5px;width:29px;height:11.5px"></div>
<span class="t" style="left:830.8px;top:245px;font-size:6.7px;font-weight:bold;color:#d8d8d8;transform:scaleX(0.853);transform-origin:0 50%">100%</span>
<svg style="left:860.5px;top:246px" width="4" height="6" viewBox="0 0 4 6"><path d="M0.6 0.6L3 3L0.6 5.4" class="ic" stroke-width="1.1"/></svg>
<span class="t" style="left:786.5px;top:264.5px;font-size:8.5px;font-style:italic;font-family:'Liberation Serif',serif;color:#dcdcdc;line-height:9px">fx<i class="t" style="position:static;font-size:5px">▾</i></span>
<span class="t" style="left:901px;top:276px;font-size:9px;letter-spacing:0.3px;line-height:9px;font-weight:bold;color:#d6d6d6">...</span>
<div class="sep" style="left:783px;top:287.5px;width:130px;background:#4c4c4c"></div>

<span class="t dim" style="left:783px;top:295px;font-size:6.5px;color:#b2b2b2;transform:scaleX(0.829);transform-origin:0 50%">Align</span>
<svg style="left:784.5px;top:311px" width="16" height="12" viewBox="0 0 16 12"><path d="M2.5 0.5V11.5M0.5 2.5H8L10.5 5V11.5H2.5M8 2.5V5H10.5" class="ic" stroke-width="1"/><path d="M11.6 5.2L13 6.6L14.4 5.2" class="ic" stroke-width="0.9"/></svg>
<svg style="left:805px;top:310px" width="100" height="13" viewBox="0 0 100 13">
<g fill="#d4d4d4">
<rect x="0.5" y="0" width="1" height="13"/><rect x="2.5" y="2" width="5" height="3.6"/><rect x="2.5" y="7.2" width="8.5" height="3.6"/>
<rect x="22.3" y="0" width="1" height="13"/><rect x="20" y="2" width="5.6" height="3.6"/><rect x="18.3" y="7.2" width="9" height="3.6"/>
<rect x="44.5" y="0" width="1" height="13"/><rect x="38.5" y="2" width="5" height="3.6"/><rect x="35.5" y="7.2" width="8" height="3.6"/>
<rect x="52" y="0.5" width="11.5" height="1"/><rect x="54" y="2.5" width="3.4" height="9"/><rect x="58.8" y="2.5" width="3.4" height="5.5"/>
<rect x="71.5" y="6" width="12" height="1"/><rect x="73.3" y="1.6" width="3.4" height="9.8"/><rect x="78.3" y="3.4" width="3.4" height="6.2"/>
<rect x="87.5" y="11.6" width="11.5" height="1"/><rect x="89.5" y="1.4" width="3.4" height="9.6"/><rect x="94.2" y="5.4" width="3.4" height="5.6"/>
</g></svg>
<span class="t" style="left:901px;top:325.5px;font-size:9px;letter-spacing:0.3px;line-height:9px;font-weight:bold;color:#d6d6d6">...</span>
<div class="sep" style="left:783px;top:337.5px;width:130px;background:#4c4c4c"></div>

<span class="t dim" style="left:783px;top:347px;font-size:6.5px;color:#b2b2b2;transform:scaleX(0.856);transform-origin:0 50%">Quick Actions</span>
<div class="btn" style="left:783.5px;top:361px;width:61.5px"><b>Offset Path</b></div>
<div class="btn" style="left:851px;top:361px;width:62.5px"><b>Expand Shape</b></div>
<div class="btn" style="left:783.5px;top:379px;width:130px"><b>Arrange</b></div>
<div class="btn" style="left:783.5px;top:397px;width:130px"><b>Align to Pixel Grid</b></div>
<div class="btn" style="left:783.5px;top:415px;width:130px"><b>Recolor</b></div>

<div id="hl"></div>
<div id="label"><span>Advanced vector graphics tools</span></div>
<div id="task">
<svg style="left:9.5px;top:5.5px" width="12" height="12" viewBox="0 0 12 12"><path d="M0 1.7L4.9 1V5.6H0ZM5.6 0.9L12 0V5.6H5.6ZM0 6.3H4.9V10.9L0 10.2ZM5.6 6.3H12V12L5.6 11.1Z" fill="#fff"/></svg>
<svg style="left:37px;top:4px" width="17" height="17" viewBox="0 0 17 17"><circle cx="10" cy="7" r="5.2" fill="none" stroke="#fff" stroke-width="1.7"/><path d="M6.4 10.8L1.4 15.8" stroke="#fff" stroke-width="2"/></svg>
<svg style="left:69px;top:5.5px" width="17" height="13" viewBox="0 0 17 13"><path d="M0.5 1.2Q0.5 0.5 1.2 0.5H6L7.4 2H15.8Q16.5 2 16.5 2.7V12.5H0.5Z" fill="#f6b92c"/><rect x="0.5" y="3.6" width="16" height="8.9" fill="#ffd75e"/><rect x="3" y="6.6" width="11" height="5.9" fill="#3d8fe8"/><rect x="5.6" y="9" width="5.8" height="3.5" fill="#ffd75e"/></svg>
<svg style="left:101px;top:4px" width="17" height="17" viewBox="0 0 17 17"><circle cx="8.5" cy="8.5" r="8.2" fill="#e8392c"/><path d="M8.5 8.5L1.4 4.4A8.2 8.2 0 0 0 6.4 16.4L10 10.6Z" fill="#3aa757"/><path d="M8.5 8.5L15.6 12.6A8.2 8.2 0 0 1 6.4 16.4L10.6 9.6Z" fill="#fbc116"/><path d="M8.5 4.4H15.6A8.2 8.2 0 0 0 1.4 4.4Z" fill="#e8392c"/><circle cx="8.5" cy="8.5" r="3.9" fill="#fff"/><circle cx="8.5" cy="8.5" r="3" fill="#3b7fe6"/></svg>
<svg style="left:132px;top:5px" width="15" height="14" viewBox="0 0 15 14"><rect width="15" height="14" rx="1.2" fill="#061c33"/><rect x="0.6" y="0.6" width="13.8" height="12.8" rx="0.8" fill="none" stroke="#0c3054" stroke-width="0.8"/></svg>
<span class="t" style="left:135px;top:7.6px;font-size:8.2px;font-weight:bold;color:#38a8ff;line-height:9px;letter-spacing:-0.2px">Ps</span>
<div style="left:63px;top:22.3px;width:27px;height:1.7px;background:#7fb4dc"></div>
<div style="left:97px;top:22.3px;width:25px;height:1.7px;background:#7fb4dc"></div>
<div style="left:127px;top:22.3px;width:25px;height:1.7px;background:#7fb4dc"></div>
<svg style="left:849px;top:8.5px" width="10" height="6" viewBox="0 0 10 6"><path d="M0.8 5.2L5 1L9.2 5.2" fill="none" stroke="#f4f4f4" stroke-width="1.2"/></svg>
<span class="t" style="left:865.5px;top:7.5px;font-size:7.6px;color:#fff;line-height:9px;letter-spacing:-0.1px">ENG</span>
<span class="t" style="left:897px;top:1.6px;font-size:7.6px;color:#fff;line-height:9px;letter-spacing:-0.25px">15:21</span>
<span class="t" style="left:888px;top:13.4px;font-size:7.6px;color:#fff;line-height:9px;letter-spacing:-0.3px">08.02.2024</span>
<svg style="left:934.5px;top:7px" width="11" height="11" viewBox="0 0 11 11"><path d="M0.5 0.5H10.5V8H4L1.6 10.4V8H0.5Z" fill="#f2f2f2"/><path d="M2.4 2.6H8.6M2.4 4.4H8.6M2.4 6.2H6" stroke="#5a6a88" stroke-width="0.7"/></svg>
<div style="left:956.5px;top:0;width:1px;height:24px;background:#5a6a8a"></div>

</div>
</div>
</body>
</html>
